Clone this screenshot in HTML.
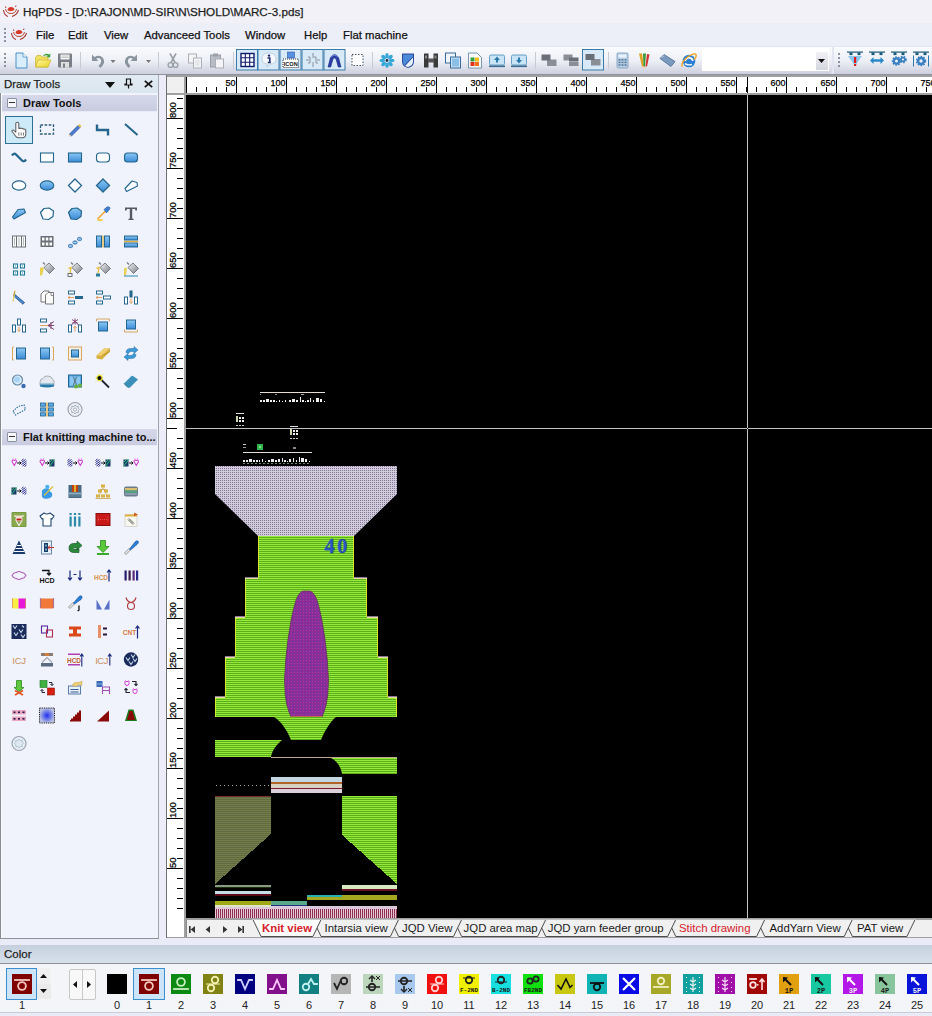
<!DOCTYPE html><html><head><meta charset="utf-8"><style>
*{box-sizing:border-box;margin:0;padding:0}
html,body{width:932px;height:1016px;overflow:hidden;background:#e9ebf6;font-family:"Liberation Sans",sans-serif;color:#1a1a1a}
body{position:relative}
.a{position:absolute}
.lbl{position:absolute;font-size:11px;color:#222;text-align:center;width:30px}
.tx{-webkit-text-stroke:0.25px currentColor}
</style></head><body>
<div class="a" style="left:0;top:0;width:932px;height:23px;background:#f1f1f7"></div>
<span class="a tx" style="left:23px;top:5px;font-size:11.7px;color:#1e1e1e;white-space:nowrap">HqPDS - [D:\RAJON\MD-SIR\N\SHOLD\MARC-3.pds]</span>
<svg class="a" style="left:2px;top:4px" width="18" height="14" viewBox="0 0 18 14">
<path d="M1.5 6 Q2 11 6 12.5 M10 12.5 Q15 11 16.5 6" fill="none" stroke="#a83a30" stroke-width="1.1"/>
<path d="M3.5 5 Q4.5 9.5 9 9.5 Q13.5 9.5 14.5 5" fill="none" stroke="#b84a38" stroke-width="1"/>
<path d="M5.5 6 Q6 3 9 3 Q12 3 12.5 5.5 Q10.5 7.5 9 7 Q7 7.5 5.5 6Z" fill="#d83a2a"/>
<path d="M3.5 2.5 L4 4 M14 1.5 L13.5 3" stroke="#a83a30" stroke-width="1"/>
</svg>
<div class="a" style="left:0;top:23px;width:932px;height:23px;background:#eceef8"></div>
<div class="a" style="left:4px;top:28px;width:2px;height:2px;background:#8e92a0"></div>
<div class="a" style="left:4px;top:32px;width:2px;height:2px;background:#8e92a0"></div>
<div class="a" style="left:4px;top:36px;width:2px;height:2px;background:#8e92a0"></div>
<div class="a" style="left:4px;top:40px;width:2px;height:2px;background:#8e92a0"></div>
<svg class="a" style="left:10px;top:27px" width="18" height="14" viewBox="0 0 18 14">
<path d="M1.5 6 Q2 11 6 12.5 M10 12.5 Q15 11 16.5 6" fill="none" stroke="#a83a30" stroke-width="1.1"/>
<path d="M3.5 5 Q4.5 9.5 9 9.5 Q13.5 9.5 14.5 5" fill="none" stroke="#b84a38" stroke-width="1"/>
<path d="M5.5 6 Q6 3 9 3 Q12 3 12.5 5.5 Q10.5 7.5 9 7 Q7 7.5 5.5 6Z" fill="#d83a2a"/>
<path d="M3.5 2.5 L4 4 M14 1.5 L13.5 3" stroke="#a83a30" stroke-width="1"/>
</svg>
<span class="a tx" style="left:36px;top:29px;font-size:11.3px;color:#111;white-space:nowrap">File</span>
<span class="a tx" style="left:68px;top:29px;font-size:11.3px;color:#111;white-space:nowrap">Edit</span>
<span class="a tx" style="left:104px;top:29px;font-size:11.3px;color:#111;white-space:nowrap">View</span>
<span class="a tx" style="left:144px;top:29px;font-size:11.3px;color:#111;white-space:nowrap">Advanceed Tools</span>
<span class="a tx" style="left:245px;top:29px;font-size:11.3px;color:#111;white-space:nowrap">Window</span>
<span class="a tx" style="left:304px;top:29px;font-size:11.3px;color:#111;white-space:nowrap">Help</span>
<span class="a tx" style="left:343px;top:29px;font-size:11.3px;color:#111;white-space:nowrap">Flat machine</span>
<div class="a" style="left:0;top:46px;width:932px;height:29px;background:#e3e5f1"></div>
<div class="a" style="left:0;top:47px;width:832px;height:27px;border-radius:0 0 3px 0;background:linear-gradient(#fafbfd,#eef0f7 50%,#cdd0dd)"></div>
<div class="a" style="left:834px;top:47px;width:98px;height:27px;background:linear-gradient(#fafbfd,#eef0f7 50%,#cdd0dd)"></div>
<div class="a" style="left:4px;top:53px;width:2px;height:2px;background:#8e92a0"></div>
<div class="a" style="left:838px;top:53px;width:2px;height:2px;background:#8e92a0"></div>
<div class="a" style="left:4px;top:57px;width:2px;height:2px;background:#8e92a0"></div>
<div class="a" style="left:838px;top:57px;width:2px;height:2px;background:#8e92a0"></div>
<div class="a" style="left:4px;top:61px;width:2px;height:2px;background:#8e92a0"></div>
<div class="a" style="left:838px;top:61px;width:2px;height:2px;background:#8e92a0"></div>
<div class="a" style="left:4px;top:65px;width:2px;height:2px;background:#8e92a0"></div>
<div class="a" style="left:838px;top:65px;width:2px;height:2px;background:#8e92a0"></div>
<div class="a" style="left:80px;top:52px;width:1px;height:17px;background:#c8cad6"></div>
<div class="a" style="left:158px;top:52px;width:1px;height:17px;background:#c8cad6"></div>
<div class="a" style="left:233px;top:52px;width:1px;height:17px;background:#c8cad6"></div>
<div class="a" style="left:372px;top:52px;width:1px;height:17px;background:#c8cad6"></div>
<div class="a" style="left:535px;top:52px;width:1px;height:17px;background:#c8cad6"></div>
<div class="a" style="left:608px;top:52px;width:1px;height:17px;background:#c8cad6"></div>
<div class="a" style="left:702px;top:48px;width:127px;height:23px;background:#fff"></div>
<div class="a" style="left:816px;top:52px;width:12px;height:18px;background:linear-gradient(#f2f2f6,#d4d6de)"></div>
<svg class="a" style="left:818px;top:59px" width="8" height="5"><path d="M0 0 H7 L3.5 4Z" fill="#111"/></svg>
<svg class="a" style="left:0;top:46px" width="932" height="30" viewBox="0 46 932 30"><defs><linearGradient id="tgb" x1="0" y1="0" x2="0" y2="1"><stop offset="0" stop-color="#aee0fa"/><stop offset="1" stop-color="#5aa8e0"/></linearGradient><linearGradient id="tgy" x1="0" y1="0" x2="1" y2="1"><stop offset="0" stop-color="#fff8a0"/><stop offset="1" stop-color="#e8d020"/></linearGradient></defs><g transform="translate(13.5,52.5)"><path d="M2.5 0.5 H9.5 L13.5 4.5 V15.5 H2.5Z" fill="#d8eefc" stroke="#4a90c8" stroke-width="1"/><path d="M9.5 0.5 V4.5 H13.5" fill="#fff" stroke="#4a90c8" stroke-width="0.8"/></g><g transform="translate(35,52.5)"><path d="M0.5 5 L2 3 H6 L7 4.5 H13 V14.5 H0.5Z" fill="#f0e060" stroke="#c8b030" stroke-width="0.7"/><path d="M0.5 14.5 L3 7.5 H16 L13 14.5Z" fill="url(#tgy)" stroke="#c8b030" stroke-width="0.7"/><path d="M8 3 Q11 0 14 2 L15.5 1 L15 5 L11.5 4.5 L13 3.5 Q11 2.2 9 3.5Z" fill="#3aa040"/></g><g transform="translate(57,52.5)"><rect x="1" y="1" width="14" height="14" rx="1" fill="#7a7e86"/><rect x="3.5" y="2" width="9" height="5" fill="#f4f4f4"/><path d="M4.5 3.5 H11.5 M4.5 5 H11.5" stroke="#aaa" stroke-width="0.6"/><rect x="4" y="9.5" width="8" height="5.5" fill="#e0e0e0"/><rect x="6" y="11" width="2" height="4" fill="#7a7e86"/></g><g transform="translate(89,52.5)"><path d="M3 2 V8.5 H9.5 L7.2 6.3 Q9.5 4.8 11.5 6.5 Q13 8.5 11.5 11 L9.5 13.5 L11.5 15.5 L13.8 12.8 Q16.5 9 13.8 5.2 Q10.5 1.5 5.5 4.5 L3.2 2.2Z" fill="#8a949e"/></g><path d="M110.5 60 H115.5 L113 63Z" fill="#777"/><g transform="translate(124,52.5)"><path d="M13 2 V8.5 H6.5 L8.8 6.3 Q6.5 4.8 4.5 6.5 Q3 8.5 4.5 11 L6.5 13.5 L4.5 15.5 L2.2 12.8 Q-0.5 9 2.2 5.2 Q5.5 1.5 10.5 4.5 L12.8 2.2Z" fill="#8a949e"/></g><path d="M146 60 H151 L148.5 63Z" fill="#777"/><g transform="translate(165,52.5)"><path d="M5 1 L10 10 M11 1 L6 10" stroke="#9aa0a8" stroke-width="1.6"/><circle cx="5.5" cy="12.5" r="2.4" fill="none" stroke="#9aa0a8" stroke-width="1.4"/><circle cx="10.5" cy="12.5" r="2.4" fill="none" stroke="#9aa0a8" stroke-width="1.4"/></g><g transform="translate(187,52.5)"><rect x="1.5" y="1.5" width="8" height="9" fill="#f4f4f6" stroke="#aab0b8"/><rect x="6.5" y="5.5" width="8" height="10" fill="#f4f4f6" stroke="#aab0b8"/><path d="M8.5 8.5 H12.5 M8.5 10.5 H12.5 M8.5 12.5 H12.5" stroke="#c8ccd2" stroke-width="0.7"/></g><g transform="translate(209,52.5)"><rect x="1.5" y="2.5" width="10" height="12" fill="#b8bcc4" stroke="#9aa0a8"/><rect x="4" y="1" width="5" height="3" fill="#9aa0a8"/><rect x="6.5" y="6.5" width="8" height="9" fill="#f4f4f6" stroke="#aab0b8"/></g><rect x="236.5" y="49.5" width="21" height="20.5" fill="#d8eaf8" stroke="#3a7aa8" stroke-width="1"/><rect x="258" y="49.5" width="21" height="20.5" fill="#d8eaf8" stroke="#3a7aa8" stroke-width="1"/><rect x="280" y="49.5" width="21" height="20.5" fill="#d8eaf8" stroke="#3a7aa8" stroke-width="1"/><rect x="302" y="49.5" width="21" height="20.5" fill="#d8eaf8" stroke="#3a7aa8" stroke-width="1"/><rect x="324" y="49.5" width="21" height="20.5" fill="#d8eaf8" stroke="#3a7aa8" stroke-width="1"/><rect x="582.5" y="49.5" width="21" height="20.5" fill="#d8eaf8" stroke="#3a7aa8" stroke-width="1"/><g transform="translate(239.5,52)"><rect x="1.5" y="1.5" width="13" height="13" fill="#fff" stroke="#101a6a" stroke-width="1.4"/><path d="M5.8 1.5 V14.5 M10.2 1.5 V14.5 M1.5 5.8 H14.5 M1.5 10.2 H14.5" stroke="#101a6a" stroke-width="1.1"/></g><g transform="translate(261,52)"><path d="M8 1 Q15 1 15 7 Q15 12 9 12 L6 15 L6.5 12 Q1 11.5 1 7 Q1 1 8 1Z" fill="#f4f8fc" stroke="#b8c8d8" stroke-width="0.8"/><circle cx="8" cy="3.6" r="1.2" fill="#1a2a6a"/><path d="M6.5 6 H8.8 V10.5 H9.8 M6.8 10.5 H9.8" stroke="#1a2a6a" stroke-width="1.5" fill="none"/></g><g transform="translate(282.5,52)"><rect x="5" y="0" width="7" height="6" fill="#5a90e0" stroke="#2a5aa8" stroke-width="0.6"/><rect x="0.5" y="7" width="15.5" height="8.5" fill="#fff" stroke="#222" stroke-width="0.9" stroke-dasharray="1 1"/><text x="8.2" y="13.8" font-family="Liberation Sans" font-size="5.6" font-weight="bold" text-anchor="middle" fill="#111">ICON</text></g><g transform="translate(305,52)"><path d="M8 1 V6 M8 10 V15 M1 8 H6 M10 8 H15 M4 4 V6 H6 M10 4 V6 H12 M4 12 V10 H6 M12 12 V10 H10" stroke="#8a9098" stroke-width="1" fill="none"/></g><g transform="translate(326.5,52)"><path d="M1.5 15 L4 5.5 Q8 -0.5 12 5.5 L14.5 15 H11.8 L9.6 7.2 Q8 4.8 6.4 7.2 L4.2 15Z" fill="#2a3ea8" stroke="#16247a" stroke-width="0.6"/><path d="M4.6 5.2 Q8 1 11.4 5.2" fill="none" stroke="#8ea8ee" stroke-width="0.8"/></g><g transform="translate(349.5,52)"><rect x="2.5" y="2.5" width="11" height="11" fill="#fff" stroke="#44505a" stroke-width="1" stroke-dasharray="1.5 1.5"/></g><g transform="translate(379,52.5)"><ellipse cx="8" cy="3.2" rx="1.8" ry="2.8" fill="#38a8d8" transform="rotate(0 8 8)"/><ellipse cx="8" cy="3.2" rx="1.8" ry="2.8" fill="#38a8d8" transform="rotate(45 8 8)"/><ellipse cx="8" cy="3.2" rx="1.8" ry="2.8" fill="#38a8d8" transform="rotate(90 8 8)"/><ellipse cx="8" cy="3.2" rx="1.8" ry="2.8" fill="#38a8d8" transform="rotate(135 8 8)"/><ellipse cx="8" cy="3.2" rx="1.8" ry="2.8" fill="#38a8d8" transform="rotate(180 8 8)"/><ellipse cx="8" cy="3.2" rx="1.8" ry="2.8" fill="#38a8d8" transform="rotate(225 8 8)"/><ellipse cx="8" cy="3.2" rx="1.8" ry="2.8" fill="#38a8d8" transform="rotate(270 8 8)"/><ellipse cx="8" cy="3.2" rx="1.8" ry="2.8" fill="#38a8d8" transform="rotate(315 8 8)"/><circle cx="8" cy="8" r="1.4" fill="#1a2a4a"/></g><g transform="translate(400,52.5)"><path d="M2 1 H14 V9 Q14 14 8 15.5 Q2 14 2 9Z" fill="#2a4a9a"/><path d="M3 2 H13 V4 L4 13 Q3 11.5 3 9Z" fill="#4a8ad8"/><path d="M13 5 V9 Q13 13 8 14.5 Q6 14 5 13.5Z" fill="#e8f0f8"/></g><g transform="translate(423,52.5)"><rect x="1" y="1" width="4.5" height="14" fill="#3a3a3a"/><rect x="10.5" y="1" width="4.5" height="14" fill="#3a3a3a"/><rect x="5" y="6" width="6" height="4" fill="#555"/><rect x="2" y="3" width="2" height="3" fill="#8a8a8a"/><rect x="11.5" y="3" width="2" height="3" fill="#8a8a8a"/></g><g transform="translate(445,52.5)"><rect x="0.5" y="0.5" width="10" height="10" fill="#f0f6fc" stroke="#3a6a98" stroke-width="1"/><rect x="5.5" y="4.5" width="10" height="11" fill="#cfe4f6" stroke="#3a6a98" stroke-width="1"/><rect x="7" y="6" width="7" height="8" fill="#8ac0e8"/></g><g transform="translate(467,52.5)"><path d="M1.5 0.5 H10 L14.5 5 V15.5 H1.5Z" fill="#fafafa" stroke="#6a8aa8" stroke-width="0.9"/><rect x="3.5" y="5" width="4" height="4" fill="#30a040"/><rect x="8" y="5" width="4" height="4" fill="#f0c020"/><rect x="3.5" y="9.5" width="4" height="4" fill="#e03020"/><rect x="8" y="9.5" width="4" height="4" fill="#f07020"/></g><g transform="translate(489,52.5)"><rect x="0.5" y="2.5" width="15" height="10" rx="1.5" fill="#c8e4f6" stroke="#4a8ab8" stroke-width="0.8"/><path d="M8 4 L5 7.5 H7 V10 H9 V7.5 H11Z" fill="#2a7ab0"/><rect x="0" y="13" width="16" height="1.6" fill="#3a6a90"/></g><g transform="translate(511,52.5)"><rect x="0.5" y="2.5" width="15" height="10" rx="1.5" fill="#c8e4f6" stroke="#4a8ab8" stroke-width="0.8"/><path d="M8 11 L5 7.5 H7 V5 H9 V7.5 H11Z" fill="#2a7ab0"/><rect x="0" y="13" width="16" height="1.6" fill="#3a6a90"/></g><g transform="translate(541,52.5)"><rect x="0.5" y="2" width="9" height="6" fill="#6a6e76"/><rect x="6" y="7" width="9.5" height="6.5" fill="#8a8e96"/><rect x="6" y="7" width="3.5" height="1" fill="#6a6e76"/></g><g transform="translate(563,52.5)"><rect x="0.5" y="2" width="9" height="6" fill="#8a8e96"/><rect x="6" y="5" width="9.5" height="4" fill="#6a6e76"/><rect x="6" y="9.5" width="9.5" height="4" fill="#8a8e96"/></g><g transform="translate(585,52)"><rect x="0.5" y="2" width="9" height="6" fill="#6a6e76"/><rect x="6" y="7" width="9.5" height="6.5" fill="#8a8e96"/><rect x="6" y="7" width="3.5" height="1" fill="#6a6e76"/></g><g transform="translate(615,52.5)"><rect x="2" y="0.5" width="11" height="15" rx="1" fill="#b8d0e8" stroke="#7a9ab8" stroke-width="0.8"/><rect x="3.5" y="2" width="8" height="3" fill="#e8f4fc"/><rect x="3.5" y="6.5" width="2" height="1.6" fill="#5a7a98"/><rect x="3.5" y="9.1" width="2" height="1.6" fill="#5a7a98"/><rect x="3.5" y="11.7" width="2" height="1.6" fill="#5a7a98"/><rect x="6.5" y="6.5" width="2" height="1.6" fill="#5a7a98"/><rect x="6.5" y="9.1" width="2" height="1.6" fill="#5a7a98"/><rect x="6.5" y="11.7" width="2" height="1.6" fill="#5a7a98"/><rect x="9.5" y="6.5" width="2" height="1.6" fill="#5a7a98"/><rect x="9.5" y="9.1" width="2" height="1.6" fill="#5a7a98"/><rect x="9.5" y="11.7" width="2" height="1.6" fill="#5a7a98"/></g><g transform="translate(636,52.5)"><path d="M3 1 L6 14 L8 14 L6 1Z" fill="#e0a020"/><path d="M7 1 L7.5 14 H9 L10 1Z" fill="#3a9a3a"/><path d="M11 1.5 L9.5 14 H11 L13.5 2Z" fill="#d03030"/><path d="M5 14 L8 16 L11 14Z" fill="#e8c8a0"/></g><g transform="translate(659,52.5)"><path d="M1 6 L5 2 L16 9 L12 14Z" fill="#7a9ac0" stroke="#4a6a90" stroke-width="0.8"/><path d="M3 5 L5 3" stroke="#c8d8e8" stroke-width="1"/></g><g transform="translate(681,52.5)"><circle cx="8" cy="8.5" r="6.3" fill="#2a80d0"/><path d="M3.5 8.5 H12.5 Q12.5 4.5 8 4.5 Q4.5 4.5 3.5 8.5Z" fill="#fff"/><path d="M5 8.5 H11 Q10.5 6 8 6 Q5.5 6 5 8.5Z" fill="#2a80d0"/><path d="M4 11 Q6 13 11 12" stroke="#fff" stroke-width="1.4" fill="none"/><path d="M1 14 Q0 10 6 5 Q13 0 15 2 Q16 4 13 7" stroke="#f0a020" stroke-width="1.3" fill="none"/></g><g transform="translate(847,51.5)"><rect x="0" y="0" width="16" height="1.2" fill="#1a5a7a"/><rect x="2.5" y="1" width="3" height="2.6" fill="#1a5a7a"/><rect x="10.5" y="1" width="3" height="2.6" fill="#1a5a7a"/><path d="M1 4.5 H15 L9 13 H7Z" fill="#8ac8f0"/><rect x="7" y="5.5" width="2.2" height="6" fill="#e01818"/><rect x="7" y="12.5" width="2.2" height="2" fill="#e01818"/></g><g transform="translate(869,51.5)"><rect x="0" y="0" width="16" height="1.2" fill="#1a5a7a"/><rect x="2.5" y="1" width="3" height="2.6" fill="#1a5a7a"/><rect x="10.5" y="1" width="3" height="2.6" fill="#1a5a7a"/><path d="M1 9 L4.5 5.5 V7.8 H11.5 V5.5 L15 9 L11.5 12.5 V10.2 H4.5 V12.5Z" fill="#2a8ac8"/></g><g transform="translate(891,51.5)"><rect x="0" y="0" width="16" height="1.2" fill="#1a5a7a"/><rect x="2.5" y="1" width="3" height="2.6" fill="#1a5a7a"/><rect x="10.5" y="1" width="3" height="2.6" fill="#1a5a7a"/><circle cx="5.5" cy="9.5" r="3.8" fill="#3a80c0" stroke="#3a80c0" stroke-width="2" stroke-dasharray="1.5 1.2"/><circle cx="5.5" cy="9.5" r="1.52" fill="#e8f0f8"/><circle cx="12" cy="8" r="2.8" fill="#3a80c0" stroke="#3a80c0" stroke-width="2" stroke-dasharray="1.5 1.2"/><circle cx="12" cy="8" r="1.1199999999999999" fill="#e8f0f8"/></g><g transform="translate(913,51.5)"><rect x="0" y="0" width="16" height="1.2" fill="#1a5a7a"/><rect x="2.5" y="1" width="3" height="2.6" fill="#1a5a7a"/><rect x="10.5" y="1" width="3" height="2.6" fill="#1a5a7a"/><path d="M0.5 4 V15 M15.5 4 V15" stroke="#2a7ab0" stroke-width="1"/><circle cx="8" cy="9.5" r="4.2" fill="#3a80c0" stroke="#3a80c0" stroke-width="2" stroke-dasharray="1.5 1.2"/><circle cx="8" cy="9.5" r="1.6800000000000002" fill="#e8f0f8"/></g></svg>
<div class="a" style="left:0;top:74px;width:932px;height:1px;background:#8e909c"></div>
<div class="a" style="left:0;top:75px;width:159px;height:864px;background:#eef0f9;border-right:1px solid #a8abb8;border-bottom:1px solid #a8abb8"></div>
<div class="a" style="left:0;top:75px;width:158px;height:18px;background:linear-gradient(#e2ebf2,#dbe5ee)"></div>
<span class="a tx" style="left:4px;top:78px;font-size:11.4px;color:#1e1e1e">Draw Tools</span>
<svg class="a" style="left:105px;top:82px" width="11" height="7"><path d="M0 0 H10 L5 6Z" fill="#111"/></svg>
<svg class="a" style="left:124px;top:78px" width="9" height="11"><path d="M2.5 1 H6.5 V6 H8 V7 H1 V6 H2.5Z M4.5 7 V10.5" fill="none" stroke="#111" stroke-width="1.2"/></svg>
<svg class="a" style="left:144px;top:80px" width="9" height="8"><path d="M0.8 0.8 L8.2 7.2 M8.2 0.8 L0.8 7.2" stroke="#111" stroke-width="1.7"/></svg>
<div class="a" style="left:0;top:93px;width:159px;height:846px;background:#f0f3fc;border-left:1px solid #868a92;border-right:1px solid #a0a4ae;border-bottom:1px solid #8e9298"></div>
<div class="a" style="left:1px;top:93px;width:1px;height:845px;background:#fbfdff"></div>
<div class="a" style="left:2px;top:95px;width:155px;height:16px;background:linear-gradient(#d6d8ea,#c9cce0)"></div>
<div class="a" style="left:2px;top:111px;width:155px;height:1px;background:#e8eaf4"></div>
<div class="a" style="left:7px;top:98px;width:10px;height:10px;border:1px solid #8e93a2;background:#f6f7fb;border-radius:1px"></div>
<div class="a" style="left:9px;top:102px;width:6px;height:1px;background:#333"></div>
<span class="a" style="left:23px;top:97px;font-size:11px;font-weight:bold;color:#111;white-space:nowrap">Draw Tools</span>
<div class="a" style="left:2px;top:429px;width:155px;height:16px;background:linear-gradient(#d6d8ea,#c9cce0)"></div>
<div class="a" style="left:2px;top:445px;width:155px;height:1px;background:#e8eaf4"></div>
<div class="a" style="left:7px;top:432px;width:10px;height:10px;border:1px solid #8e93a2;background:#f6f7fb;border-radius:1px"></div>
<div class="a" style="left:9px;top:436px;width:6px;height:1px;background:#333"></div>
<span class="a" style="left:23px;top:431px;font-size:11px;font-weight:bold;color:#111;white-space:nowrap">Flat knitting machine to...</span>
<div class="a" style="left:5px;top:116px;width:28px;height:28px;background:#cdeaf8;border:1px solid #2f6f94"></div>
<svg class="a" style="left:0;top:110px" width="160" height="650" viewBox="0 110 160 650"><defs><linearGradient id="gb" x1="0" y1="0" x2="0" y2="1"><stop offset="0" stop-color="#8cc8f4"/><stop offset="1" stop-color="#3a8ad8"/></linearGradient><linearGradient id="gg" x1="0" y1="0" x2="1" y2="1"><stop offset="0" stop-color="#f4f4f6"/><stop offset="1" stop-color="#7a7e88"/></linearGradient></defs><g transform="translate(11,121.5)"><path d="M4.8 2 Q4.8 0.8 6.3 0.8 Q7.8 0.8 7.8 2 V7 Q9 6.2 10.2 7 Q11.5 6.4 12.4 7.6 Q13.8 7.2 14.8 8.6 V12.5 Q14.8 16.2 11 16.2 H7.5 Q5.5 16.2 4.3 14.2 L1 9.8 Q0.6 8.4 2.2 8.4 L4.8 10.6Z" fill="#fdfdfd" stroke="#5e5e62" stroke-width="1.05" stroke-linejoin="round"/><path d="M7.8 11 V14 M10.2 11 V14 M12.5 11 V14" stroke="#6a6a6e" stroke-width="0.9"/></g><g transform="translate(39,121.5)"><rect x="1.5" y="3.5" width="13" height="9" fill="none" stroke="#2a5a74" stroke-width="1.3" stroke-dasharray="2.6 1.5"/></g><g transform="translate(67,121.5)"><path d="M3 14 L2.5 12.5 L11 4 L13 6 L4.5 14.5Z" fill="#4a7ed0" stroke="#2a4a90" stroke-width="0.7"/><path d="M11 4 L12.5 2.5 L14.5 4.5 L13 6Z" fill="#f0c040"/><path d="M2.5 12.5 L2 15 L4.5 14.5Z" fill="#f0d090"/></g><g transform="translate(95,121.5)"><path d="M2 3 V8.5 H13 V14" fill="none" stroke="#24668c" stroke-width="2.4"/></g><g transform="translate(123,121.5)"><path d="M2 2.5 L14.5 13.5" stroke="#24668c" stroke-width="2"/></g><g transform="translate(11,149.5)"><path d="M1 6 Q3 3 5 5 L11 11 Q13 13 15 10" fill="none" stroke="#24668c" stroke-width="2.3"/></g><g transform="translate(39,149.5)"><rect x="1.5" y="3.5" width="13" height="9" fill="#fbfcff" stroke="#24668c" stroke-width="1.1"/></g><g transform="translate(67,149.5)"><rect x="1.5" y="3.5" width="13" height="9" fill="url(#gb)" stroke="#24668c" stroke-width="1.1"/></g><g transform="translate(95,149.5)"><rect x="1.5" y="3.5" width="13" height="9" rx="3" fill="#fbfcff" stroke="#24668c" stroke-width="1.1"/></g><g transform="translate(123,149.5)"><rect x="1.5" y="3.5" width="13" height="9" rx="3" fill="url(#gb)" stroke="#24668c" stroke-width="1.1"/></g><g transform="translate(11,177.5)"><ellipse cx="8" cy="8" rx="6.8" ry="4.6" fill="#fbfcff" stroke="#24668c" stroke-width="1.1"/></g><g transform="translate(39,177.5)"><ellipse cx="8" cy="8" rx="6.8" ry="4.6" fill="url(#gb)" stroke="#24668c" stroke-width="1.1"/></g><g transform="translate(67,177.5)"><path d="M8 1.5 L14.5 8 L8 14.5 L1.5 8Z" fill="#fbfcff" stroke="#24668c" stroke-width="1.3"/></g><g transform="translate(95,177.5)"><path d="M8 1.5 L14.5 8 L8 14.5 L1.5 8Z" fill="url(#gb)" stroke="#24668c" stroke-width="1.3"/></g><g transform="translate(123,177.5)"><path d="M2 11 L9 3.5 L14 5 L14.5 8.5 L3.5 14Z" fill="#fbfcff" stroke="#24668c" stroke-width="1.1" stroke-linejoin="round"/></g><g transform="translate(11,205.5)"><path d="M1.5 11.5 L7 4 L13 3.5 L14.5 7 L3 13.5Z" fill="url(#gb)" stroke="#24668c" stroke-width="1.1" stroke-linejoin="round"/></g><g transform="translate(39,205.5)"><path d="M1.5 7 L5 3 L10 2.5 L14.5 5.5 L14 11 L9.5 14 L4 13.5Z" fill="#fbfcff" stroke="#24668c" stroke-width="1.2" stroke-linejoin="round"/></g><g transform="translate(67,205.5)"><path d="M1.5 7 L5 3 L10 2.5 L14.5 5.5 L14 11 L9.5 14 L4 13.5Z" fill="url(#gb)" stroke="#24668c" stroke-width="1.2" stroke-linejoin="round"/></g><g transform="translate(95,205.5)"><path d="M2 13 L10 5 L11 6 L3 14Z" fill="#f0a030"/><path d="M9 4 L12 1.5 Q14 0.8 14.8 2 Q15.4 3 14 4.5 L11.5 7.5Z" fill="#3a80d0" stroke="#2a5a9a" stroke-width="0.6"/><ellipse cx="5" cy="14.6" rx="3" ry="1.2" fill="#f0d050"/></g><g transform="translate(123,205.5)"><path d="M2 2 H14 V5 H12.5 L12 3.6 H9.2 V13 L10.6 13.6 V14.5 H5.4 V13.6 L6.8 13 V3.6 H4 L3.5 5 H2Z" fill="#555a62"/></g><g transform="translate(11,233.5)"><rect x="1.5" y="2.5" width="13" height="11" fill="#fff" stroke="#6b6e76"/><path d="M5.5 2.5 V13.5 M10.5 2.5 V13.5" stroke="#6b6e76"/><path d="M3.5 4 V12 M8 4 V12 M12.5 4 V12" stroke="#9aa" stroke-width="0.8"/></g><g transform="translate(39,233.5)"><rect x="1.5" y="2.5" width="13" height="11" fill="#6b6e76"/><g fill="#fff"><rect x="3" y="4" width="2.5" height="3"/><rect x="6.8" y="4" width="2.5" height="3"/><rect x="10.5" y="4" width="2.5" height="3"/><rect x="3" y="9" width="2.5" height="3"/><rect x="6.8" y="9" width="2.5" height="3"/><rect x="10.5" y="9" width="2.5" height="3"/></g></g><g transform="translate(67,233.5)"><g fill="#5a9ad8" stroke="#2a6aa0" stroke-width="0.6"><ellipse cx="3.5" cy="12.5" rx="2.2" ry="1.8"/><ellipse cx="8" cy="9" rx="2.2" ry="1.8"/><ellipse cx="12.5" cy="5.5" rx="2.2" ry="1.8"/></g><path d="M2 12.5 H5 M6.5 9 H9.5 M11 5.5 H14" stroke="#fff" stroke-width="0.6"/></g><g transform="translate(95,233.5)"><rect x="1.5" y="2.5" width="5" height="11" fill="url(#gb)" stroke="#24668c"/><rect x="9.5" y="2.5" width="5" height="11" fill="url(#gb)" stroke="#24668c"/><rect x="7.4" y="2" width="1.2" height="12" fill="#e0b040"/></g><g transform="translate(123,233.5)"><rect x="1.5" y="2.5" width="13" height="4" fill="url(#gb)" stroke="#24668c"/><rect x="1.5" y="9.5" width="13" height="4" fill="url(#gb)" stroke="#24668c"/><rect x="1" y="7.4" width="14" height="1.2" fill="#e0b040"/></g><g transform="translate(11,261.5)"><g fill="#fff" stroke="#1e7a94" stroke-width="1.1"><rect x="2.5" y="2.5" width="4" height="4"/><rect x="9.5" y="2.5" width="4" height="4"/><rect x="2.5" y="9.5" width="4" height="4"/><rect x="9.5" y="9.5" width="4" height="4"/></g><g fill="#2a8ab0"><rect x="4" y="4" width="1" height="1"/><rect x="11" y="4" width="1" height="1"/><rect x="4" y="11" width="1" height="1"/><rect x="11" y="11" width="1" height="1"/></g></g><g transform="translate(39,261.5)"><path d="M5 6 L10 1.5 L15.5 7 L10.5 12 Z" fill="url(#gg)" stroke="#555" stroke-width="0.7"/><path d="M6 3 L4 1" stroke="#777" stroke-width="1.2"/><path d="M1 6 L5 6 L3 14 L1 14Z" fill="#e8d050"/></g><g transform="translate(67,261.5)"><path d="M5 6 L10 1.5 L15.5 7 L10.5 12 Z" fill="url(#gg)" stroke="#555" stroke-width="0.7"/><path d="M6 3 L4 1" stroke="#777" stroke-width="1.2"/><path d="M1.5 7 L4 6 L3 12" fill="none" stroke="#e8c040" stroke-width="1.4"/><rect x="1" y="12" width="4" height="3" fill="none" stroke="#555" stroke-width="0.8"/></g><g transform="translate(95,261.5)"><path d="M5 6 L10 1.5 L15.5 7 L10.5 12 Z" fill="url(#gg)" stroke="#555" stroke-width="0.7"/><path d="M6 3 L4 1" stroke="#777" stroke-width="1.2"/><path d="M1.5 7 L4 6 L3 12" fill="none" stroke="#e8c040" stroke-width="1.4"/><rect x="1" y="12" width="4" height="3" fill="#2a7a9a"/></g><g transform="translate(123,261.5)"><path d="M5 6 L10 1.5 L15.5 7 L10.5 12 Z" fill="url(#gg)" stroke="#555" stroke-width="0.7"/><path d="M6 3 L4 1" stroke="#777" stroke-width="1.2"/><path d="M1 7 L4 6 L3 14 L1 14Z" fill="#e8d050"/><rect x="1" y="14" width="14" height="1" fill="#2a8ab0"/></g><g transform="translate(11,289.5)"><path d="M4 5 L13.5 13 L12 14.8 L2.5 6.5Z" fill="#4a8ad0" stroke="#24568c" stroke-width="0.8"/><path d="M4 1 L2 12" stroke="#e8d060" stroke-width="1.3"/><path d="M3.6 2 L2.8 6" stroke="#a08020" stroke-width="0.8"/></g><g transform="translate(39,289.5)"><path d="M2 4.5 L5 1.5 H10 V12.5 H2Z" fill="#fafafa" stroke="#6a6a6a" stroke-width="0.9"/><path d="M6.5 5.5 L9 3 H14.5 V14.5 H6.5Z" fill="#fafafa" stroke="#6a6a6a" stroke-width="0.9"/><path d="M12 3.5 V6 H14" fill="none" stroke="#777" stroke-width="0.8"/></g><g transform="translate(67,289.5)"><g fill="#fff" stroke="#24668c"><rect x="1.5" y="1.5" width="6" height="3"/><rect x="1.5" y="11.5" width="6" height="3"/></g><rect x="8" y="6.5" width="8" height="3" fill="#24668c"/><path d="M1 8 H7" stroke="#e0a060" stroke-width="1"/><path d="M3 6.5 L1 8 L3 9.5" fill="none" stroke="#e0a060" stroke-width="0.9"/></g><g transform="translate(95,289.5)"><g fill="#fff" stroke="#24668c"><rect x="1.5" y="1.5" width="6" height="3"/><rect x="8.5" y="6.5" width="7" height="3"/><rect x="1.5" y="11.5" width="6" height="3"/></g><path d="M1 8 H7" stroke="#e0a060" stroke-width="1"/><path d="M3 6.5 L1 8 L3 9.5" fill="none" stroke="#e0a060" stroke-width="0.9"/></g><g transform="translate(123,289.5)"><g fill="#fff" stroke="#24668c"><rect x="1.5" y="7.5" width="3" height="7"/><rect x="11.5" y="7.5" width="3" height="7"/></g><rect x="6.5" y="1" width="3" height="7" fill="#24668c"/><path d="M8 9 V14" stroke="#e0a060"/><path d="M6.5 12 L8 14 L9.5 12" fill="none" stroke="#e0a060" stroke-width="0.9"/></g><g transform="translate(11,317.5)"><g fill="#fff" stroke="#24668c"><rect x="1.5" y="7.5" width="3" height="7"/><rect x="11.5" y="7.5" width="3" height="7"/><rect x="6.5" y="1.5" width="3" height="6"/></g><path d="M8 9 V14" stroke="#e0a060"/><path d="M6.5 12 L8 14 L9.5 12" fill="none" stroke="#e0a060" stroke-width="0.9"/></g><g transform="translate(39,317.5)"><g fill="#fff" stroke="#24668c"><rect x="1.5" y="1.5" width="6" height="3"/><rect x="1.5" y="11.5" width="6" height="3"/></g><path d="M1 8 H9" stroke="#e0a060"/><path d="M9 8 L15 4 M9 8 L15 12 M9 8 H15 M12 4.5 V11.5" stroke="#7a3a6a" stroke-width="0.9"/></g><g transform="translate(67,317.5)"><g fill="#fff" stroke="#24668c"><rect x="1.5" y="7.5" width="3" height="7"/><rect x="11.5" y="7.5" width="3" height="7"/></g><path d="M8 8.5 V14" stroke="#e0a060"/><path d="M6.5 10.5 L8 8.5 L9.5 10.5" fill="none" stroke="#e0a060" stroke-width="0.9"/><path d="M8 1 V7 M5 2 L11 6 M11 2 L5 6 M4.5 7.5 L8 4 L11.5 7.5" stroke="#7a3a6a" stroke-width="0.9" fill="none"/></g><g transform="translate(95,317.5)"><path d="M1.5 4 V1.5 H14.5 V4" fill="none" stroke="#d8a860" stroke-width="1"/><rect x="3.5" y="4.5" width="9" height="9" fill="url(#gb)" stroke="#24668c"/></g><g transform="translate(123,317.5)"><path d="M1.5 12 V14.5 H14.5 V12" fill="none" stroke="#d8a860" stroke-width="1"/><rect x="3.5" y="2.5" width="9" height="9" fill="url(#gb)" stroke="#24668c"/></g><g transform="translate(11,345.5)"><path d="M3 1.5 H1.5 V14.5 H3" fill="none" stroke="#d8a860" stroke-width="1"/><rect x="5.5" y="2.5" width="9" height="11" fill="url(#gb)" stroke="#24668c"/></g><g transform="translate(39,345.5)"><path d="M13 1.5 H14.5 V14.5 H13" fill="none" stroke="#d8a860" stroke-width="1"/><rect x="1.5" y="2.5" width="9" height="11" fill="url(#gb)" stroke="#24668c"/></g><g transform="translate(67,345.5)"><rect x="1.5" y="1.5" width="13" height="13" fill="#f6f0e6" stroke="#d8a860"/><rect x="4.5" y="4.5" width="7" height="7" fill="url(#gb)" stroke="#24668c"/></g><g transform="translate(95,345.5)"><path d="M1.5 10 L9 3 H14.5 L14.5 6.5 L7 14 L1.5 13Z" fill="#d8b040"/><path d="M1.5 10 L9 3 H14.5 L7 10Z" fill="#f0d070"/><path d="M7 10 L14.5 6.5 V3" fill="none" stroke="#b08820" stroke-width="0.6"/></g><g transform="translate(123,345.5)"><path d="M3 7 Q3 3 8 3 H11 V1 L15 4.5 L11 8 V6 H8 Q6 6 5.5 8Z" fill="#3a9ad8" stroke="#2a6aa0" stroke-width="0.5"/><path d="M13 9 Q13 13 8 13 H5 V15 L1 11.5 L5 8 V10 H8 Q10 10 10.5 8Z" fill="#3a9ad8" stroke="#2a6aa0" stroke-width="0.5"/></g><g transform="translate(11,373.5)"><circle cx="6.5" cy="6.5" r="5" fill="#d8ecf8" stroke="#6a8aa8" stroke-width="1.2"/><circle cx="6" cy="6" r="3" fill="#a8d4f4"/><circle cx="12.5" cy="12.5" r="2.2" fill="#3a6ab0"/></g><g transform="translate(39,373.5)"><path d="M1 9 Q1 5 4 5 Q5 2 9 2.5 Q13 3 14 6 Q15.5 7 15 10 L15 12 L1 12Z" fill="#e4e8ee" stroke="#8a9098" stroke-width="0.7"/><path d="M1 10 H15 V13 Q8 15 1 13Z" fill="#2a7aa8"/><path d="M1 10.5 H15" stroke="#cfe4f0" stroke-width="0.8"/></g><g transform="translate(67,373.5)"><rect x="1.5" y="1.5" width="13" height="12" fill="#5aaae8" stroke="#24668c"/><rect x="3" y="3" width="4.5" height="9" fill="#8ac8f4"/><rect x="8.5" y="3" width="4.5" height="9" fill="#8ac8f4"/><path d="M6 3 L10 12 M10 3 L6 12" stroke="#555" stroke-width="0.7"/><circle cx="9" cy="13" r="2" fill="#6ab040"/><circle cx="13" cy="12" r="2" fill="#6ab040"/></g><g transform="translate(95,373.5)"><path d="M6 6 L14 14" stroke="#223" stroke-width="1.8"/><circle cx="4.5" cy="4.5" r="2.6" fill="#111" stroke="#e8e030" stroke-width="1.2"/><path d="M4.5 0.5 V1.5 M0.5 4.5 H1.5 M8 1 L7.5 1.5 M1 8 L1.5 7.5" stroke="#e8e030"/></g><g transform="translate(123,373.5)"><path d="M1 10 L8 3 Q9 2 10 2.5 L15 6 L7 14 Q6 14.5 5 14Z" fill="#3a90b8"/><path d="M1 10 L5 14" stroke="#2a6a8a" stroke-width="1"/></g><g transform="translate(11,401.5)"><path d="M2 10 L7 5 L13 3.5 L14.5 8 L4.5 13.5Z" fill="none" stroke="#24668c" stroke-width="1.1" stroke-dasharray="1.4 1.2"/></g><g transform="translate(39,401.5)"><g fill="#5aaae8" stroke="#24668c" stroke-width="0.8"><rect x="1.5" y="1.5" width="5" height="3.2"/><rect x="1.5" y="6.4" width="5" height="3.2"/><rect x="1.5" y="11.3" width="5" height="3.2"/><rect x="9.5" y="1.5" width="5" height="3.2"/><rect x="9.5" y="6.4" width="5" height="3.2"/><rect x="9.5" y="11.3" width="5" height="3.2"/></g><rect x="7.4" y="1" width="1.2" height="14" fill="#e0b040"/></g><g transform="translate(67,401.5)"><circle cx="8" cy="8" r="7" fill="#eef0f6" stroke="#9a9ea8" stroke-width="1.1"/><path d="M8 3.5 L9.3 5 L11.2 4.8 L11.2 6.7 L12.5 8 L11.2 9.3 L11.2 11.2 L9.3 11 L8 12.5 L6.7 11 L4.8 11.2 L4.8 9.3 L3.5 8 L4.8 6.7 L4.8 4.8 L6.7 5Z" fill="none" stroke="#9aa8b8" stroke-width="0.9"/><circle cx="8" cy="8" r="1.6" fill="none" stroke="#9aa8b8" stroke-width="0.8"/></g><g transform="translate(11,455.5)"><path d="M1.0 6 Q1.0 4.5 2.3 4.5 Q3.3 4.5 3.3 5.6 Q3.3 4.5 4.3 4.5 Q5.5 4.5 5.5 6 L3.3 10Z" fill="none" stroke="#d040d0" stroke-width="1.1"/><path d="M2.0 4 L2.0 3 M4.5 4 L4.5 3" stroke="#d040d0" stroke-width="0.8"/><path d="M6 7.5 H10 M8.5 6 L10 7.5 L8.5 9" stroke="#111" stroke-width="1" fill="none"/><path d="M10.5 5 L12.5 3.5 M10.5 7 L14.5 4 M10.5 9 L15.5 5.5 M11.5 10.5 L15.5 7.5 M13.5 11 L15.5 9.5" stroke="#2a2a8a" stroke-width="1"/></g><g transform="translate(39,455.5)"><path d="M1.0 6 Q1.0 4.5 2.3 4.5 Q3.3 4.5 3.3 5.6 Q3.3 4.5 4.3 4.5 Q5.5 4.5 5.5 6 L3.3 10Z" fill="none" stroke="#d040d0" stroke-width="1.1"/><path d="M2.0 4 L2.0 3 M4.5 4 L4.5 3" stroke="#d040d0" stroke-width="0.8"/><path d="M6 7.5 H10 M8.5 6 L10 7.5 L8.5 9" stroke="#111" stroke-width="1" fill="none"/><rect x="10.5" y="4" width="5" height="7" fill="#1a3a6a"/><path d="M10.5 11 L15.5 4 M10.5 7 L13.5 4" stroke="#30c070" stroke-width="1"/></g><g transform="translate(67,455.5)"><path d="M0.5 5 L2.5 3.5 M0.5 7 L4.5 4 M0.5 9 L5.5 5.5 M1.5 10.5 L5.5 7.5 M3.5 11 L5.5 9.5" stroke="#2a2a8a" stroke-width="1"/><path d="M6 7.5 H10 M8.5 6 L10 7.5 L8.5 9" stroke="#111" stroke-width="1" fill="none"/><path d="M11.0 6 Q11.0 4.5 12.3 4.5 Q13.3 4.5 13.3 5.6 Q13.3 4.5 14.3 4.5 Q15.5 4.5 15.5 6 L13.3 10Z" fill="none" stroke="#d040d0" stroke-width="1.1"/><path d="M12.0 4 L12.0 3 M14.5 4 L14.5 3" stroke="#d040d0" stroke-width="0.8"/></g><g transform="translate(95,455.5)"><path d="M0.5 5 L2.5 3.5 M0.5 7 L4.5 4 M0.5 9 L5.5 5.5 M1.5 10.5 L5.5 7.5 M3.5 11 L5.5 9.5" stroke="#2a2a8a" stroke-width="1"/><path d="M6 7.5 H10 M8.5 6 L10 7.5 L8.5 9" stroke="#111" stroke-width="1" fill="none"/><rect x="10.5" y="4" width="5" height="7" fill="#1a3a6a"/><path d="M10.5 11 L15.5 4 M10.5 7 L13.5 4" stroke="#30c070" stroke-width="1"/></g><g transform="translate(123,455.5)"><rect x="0.5" y="4" width="5" height="7" fill="#1a3a6a"/><path d="M0.5 11 L5.5 4 M0.5 7 L3.5 4" stroke="#30c070" stroke-width="1"/><path d="M6 7.5 H10 M8.5 6 L10 7.5 L8.5 9" stroke="#111" stroke-width="1" fill="none"/><path d="M11.0 6 Q11.0 4.5 12.3 4.5 Q13.3 4.5 13.3 5.6 Q13.3 4.5 14.3 4.5 Q15.5 4.5 15.5 6 L13.3 10Z" fill="none" stroke="#d040d0" stroke-width="1.1"/><path d="M12.0 4 L12.0 3 M14.5 4 L14.5 3" stroke="#d040d0" stroke-width="0.8"/></g><g transform="translate(11,483.5)"><rect x="0.5" y="4" width="5" height="7" fill="#1a3a6a"/><path d="M0.5 11 L5.5 4 M0.5 7 L3.5 4" stroke="#30c070" stroke-width="1"/><path d="M6 7.5 H10 M8.5 6 L10 7.5 L8.5 9" stroke="#111" stroke-width="1" fill="none"/><path d="M10.5 5 L12.5 3.5 M10.5 7 L14.5 4 M10.5 9 L15.5 5.5 M11.5 10.5 L15.5 7.5 M13.5 11 L15.5 9.5" stroke="#2a2a8a" stroke-width="1"/></g><g transform="translate(39,483.5)"><path d="M3 10 Q2 6 6 5 Q10 4 11 8 Q14 9 13 13 Q10 16 5 15 Q2 14 3 10Z" fill="#3a9ae8"/><path d="M6 3 Q7 0.5 9.5 1.5 Q11 3 10 5 Q7 6 6 3Z" fill="#4ab0f0"/><path d="M5 12 L14 3" stroke="#d8c040" stroke-width="1.3"/></g><g transform="translate(67,483.5)"><rect x="1.5" y="1.5" width="13" height="13" fill="#4a6a80"/><rect x="5" y="1.5" width="6" height="7" fill="#c04010"/><rect x="7" y="1.5" width="2" height="7" fill="#e0b030"/><rect x="1.5" y="9" width="13" height="2" fill="#8ab0c0"/><rect x="1.5" y="12" width="13" height="1" fill="#6a90a8"/></g><g transform="translate(95,483.5)"><g fill="#d8b040"><rect x="6" y="1" width="4" height="3"/><rect x="3" y="6" width="4" height="3"/><rect x="9" y="6" width="4" height="3"/><rect x="1" y="11" width="4" height="3"/><rect x="6" y="11" width="4" height="3"/><rect x="11" y="11" width="4" height="3"/></g><path d="M8 4 V6 L5 6 M8 6 H11 M5 9 V11 M11 9 V11 M0.5 15 H15.5" stroke="#c8a040" stroke-width="0.8" fill="none"/></g><g transform="translate(123,483.5)"><rect x="1" y="3" width="14" height="10" rx="2" fill="#6a7a8a"/><rect x="2" y="4.5" width="12" height="2.5" fill="#d8c070"/><rect x="2" y="7" width="12" height="2.5" fill="#50a080"/><rect x="2" y="9.5" width="12" height="2" fill="#8a9ab0"/></g><g transform="translate(11,511.5)"><rect x="0.5" y="0.5" width="15" height="15" rx="1" fill="#7a9a40"/><rect x="1.5" y="1.5" width="13" height="13" fill="#8aaa50"/><path d="M3 4 Q8 9 13 4 M5 7 H11 V9 H5Z" fill="#f0e0d0" stroke="#f8f0e8" stroke-width="1"/><path d="M5 9 L8 14 L11 9" fill="none" stroke="#f0e8e0" stroke-width="1.2"/><rect x="5.5" y="7" width="5" height="2" fill="#c02020"/></g><g transform="translate(39,511.5)"><path d="M5 1.5 Q8 3.5 11 1.5 L15 4.5 L13 7.5 L12 7 V14.5 H4 V7 L3 7.5 L1 4.5Z" fill="#fff" stroke="#24466c" stroke-width="1.1" stroke-linejoin="round"/></g><g transform="translate(67,511.5)"><g fill="#2a8aa8"><rect x="2.5" y="5" width="2.2" height="10"/><rect x="6.9" y="5" width="2.2" height="10"/><rect x="11.3" y="5" width="2.2" height="10"/><rect x="2.5" y="1.5" width="2.2" height="2"/><rect x="6.9" y="1.5" width="2.2" height="2"/><rect x="11.3" y="1.5" width="2.2" height="2"/></g></g><g transform="translate(95,511.5)"><rect x="1" y="2" width="14" height="12" fill="#c81818"/><rect x="1" y="2" width="14" height="12" fill="none" stroke="#8a1010"/><path d="M3 5 V11 M13 5 V11 M3 8 H13" stroke="#f06060" stroke-width="0.8" stroke-dasharray="1 1"/></g><g transform="translate(123,511.5)"><rect x="2" y="3" width="12" height="12" fill="#f8f8f0" stroke="#c8c8c0" stroke-width="0.7"/><path d="M2 3 H14 V5 H2Z" fill="#e0b040"/><path d="M11 1 L15 3 L11 5Z" fill="#d06020"/><path d="M5 8 L10 13 M6 7 L11 12" stroke="#444" stroke-width="0.9"/></g><g transform="translate(11,539.5)"><path d="M8 1 L14.5 14.5 H1.5Z" fill="#1a3a6a"/><path d="M6 6 H10 M4.5 9 H11.5 M3 12 H13" stroke="#fff" stroke-width="1"/></g><g transform="translate(39,539.5)"><rect x="2.5" y="1.5" width="10" height="13" fill="#e8f0f8" stroke="#6a8aa8"/><rect x="5" y="3.5" width="4" height="9" fill="#1a3a6a"/><rect x="6" y="5" width="2" height="2" fill="#6ab"/><rect x="6" y="9" width="2" height="2" fill="#6ab"/><path d="M9 8 H15 M11 6 L9 8 L11 10" stroke="#c03030" stroke-width="1" fill="none"/></g><g transform="translate(67,539.5)"><path d="M12 13 H7 Q2 13 2 8.5 Q2 4 7 4 H10 V1.5 L15 6 L10 10.5 V8 H7 Q6 8 6 8.5 Q6 9.5 7 9.5 H12Z" fill="#2a8a3a" stroke="#1a5a2a" stroke-width="0.7"/></g><g transform="translate(95,539.5)"><path d="M5.5 1 H10.5 V7 H14 L8 13 L2 7 H5.5Z" fill="#5ac83a" stroke="#2a8a1a" stroke-width="0.8"/><rect x="2" y="13.5" width="12" height="2" fill="#3aaa2a"/></g><g transform="translate(123,539.5)"><path d="M3 15 L1.5 13.5 L6 9 L7.5 10.5Z" fill="#e8e8e8" stroke="#777" stroke-width="0.7"/><path d="M6.5 9.5 L12 2.5 Q14 0.5 15.2 1.8 Q16 3.5 14 5 L7.5 10.5Z" fill="#2a80d8" stroke="#1a5aa0" stroke-width="0.7"/></g><g transform="translate(11,567.5)"><path d="M1 8 Q3 4.5 5.5 5 Q8 3 10.5 5 Q13 4.5 15 8 Q13 11.5 10.5 11 Q8 13 5.5 11 Q3 11.5 1 8Z" fill="none" stroke="#b060b8" stroke-width="1.1"/></g><g transform="translate(39,567.5)"><path d="M3 3 H10 V7 M8 5.5 L10 7.5 L12 5.5" stroke="#111" stroke-width="1.3" fill="none"/><text x="8" y="15" font-family="Liberation Sans" font-size="7" font-weight="bold" text-anchor="middle" fill="#111">HCD</text></g><g transform="translate(67,567.5)"><path d="M3 3 V12 M1 10 L3 12.5 L5 10 M13 3 V12 M11 10 L13 12.5 L15 10 M6.5 7 H9.5" stroke="#1a2a7a" stroke-width="1.2" fill="none"/></g><g transform="translate(95,567.5)"><text x="6" y="12" font-family="Liberation Sans" font-size="6.5" font-weight="bold" text-anchor="middle" fill="#d89050">HCD</text><path d="M14 14 V3 M12 5 L14 2.5 L16 5" stroke="#1a2a7a" stroke-width="1.2" fill="none"/></g><g transform="translate(123,567.5)"><rect x="1.5" y="3" width="2.2" height="10" fill="#2a1a6a"/><rect x="5.5" y="3" width="2.2" height="10" fill="#3a1a4a"/><rect x="9.5" y="3" width="2.2" height="10" fill="#5a2a7a"/><rect x="13" y="3" width="2.2" height="10" fill="#2a2a8a"/></g><g transform="translate(11,595.5)"><rect x="1.5" y="3" width="6" height="10" fill="#f8f040"/><rect x="7.5" y="3" width="7" height="10" fill="#e818d8"/><path d="M1.5 3 V13 M14.5 3 V13" stroke="#c86010" stroke-width="1" stroke-dasharray="1 1"/></g><g transform="translate(39,595.5)"><rect x="1.5" y="3" width="13" height="10" fill="#f07838"/><path d="M1.5 3 V13 M14.5 3 V13" stroke="#6a2a8a" stroke-width="1.2" stroke-dasharray="1 1"/></g><g transform="translate(67,595.5)"><path d="M3 13 L1.5 11.5 L6 7 L7.5 8.5Z" fill="#e8e8e8" stroke="#777" stroke-width="0.7"/><path d="M6.5 7.5 L12 1 Q14 -0.5 15 1 Q15.5 2.5 14 4 L7.5 8.5Z" fill="#2a80d8" stroke="#1a5aa0" stroke-width="0.7"/><path d="M12 10 V14 Q12 15.5 10.5 15" stroke="#111" stroke-width="1.3" fill="none"/></g><g transform="translate(95,595.5)"><path d="M1.5 4 L7 14 H1.5Z M14.5 4 L9 14 H14.5Z" fill="#5a70c8"/></g><g transform="translate(123,595.5)"><circle cx="8" cy="10.5" r="3.5" fill="none" stroke="#b04040" stroke-width="1.2"/><path d="M3 2 Q4 6 8 7 Q12 6 13 2" fill="none" stroke="#b04040" stroke-width="1.2"/></g><g transform="translate(11,623.5)"><rect x="0.5" y="0.5" width="15" height="15" fill="#1a2a5a"/><path d="M2 2 L4 5 L6 2 M8 6 L10 9 L12 6 M3 9 L5 12 L7 9 M10 11 L12 14 L14 11 M11 2 L13 4" stroke="#c8d8e8" stroke-width="1.1" fill="none"/></g><g transform="translate(39,623.5)"><rect x="2.5" y="2.5" width="6" height="7" fill="none" stroke="#5a2a9a" stroke-width="1.1"/><rect x="7.5" y="6.5" width="6" height="7" fill="none" stroke="#b03050" stroke-width="1.1"/></g><g transform="translate(67,623.5)"><path d="M2 3 H14 V6 H10 V10 H14 V13 H2 V10 H6 V6 H2Z" fill="#d84818"/></g><g transform="translate(95,623.5)"><rect x="3" y="1.5" width="3" height="13" fill="#e8906a"/><rect x="8" y="4" width="4" height="2" fill="#2a1a3a"/><rect x="8" y="10" width="4" height="2" fill="#2a1a3a"/></g><g transform="translate(123,623.5)"><text x="6.5" y="11.5" font-family="Liberation Sans" font-size="6.5" font-weight="bold" text-anchor="middle" fill="#d8783a">CNT</text><path d="M14.5 15 V3 M12.5 5 L14.5 2.5 L16.5 5" stroke="#1a2a7a" stroke-width="1.2" fill="none"/></g><g transform="translate(11,651.5)"><text x="8" y="12.5" font-family="Liberation Sans" font-size="9.5" text-anchor="middle" fill="#c89060" letter-spacing="-0.3">ICJ</text></g><g transform="translate(39,651.5)"><rect x="2" y="1.5" width="12" height="3" fill="#8a7a70"/><rect x="6" y="1.5" width="4" height="3" fill="#d08040"/><path d="M3 11 L8 6 L13 11" fill="none" stroke="#a0a8b0" stroke-width="1.2"/><rect x="2" y="11.5" width="12" height="3.5" fill="#5a6a80"/></g><g transform="translate(67,651.5)"><rect x="1" y="2" width="12" height="1.5" fill="#b040b0"/><rect x="1" y="12.5" width="12" height="1.5" fill="#b040b0"/><text x="7" y="11" font-family="Liberation Sans" font-size="6.5" font-weight="bold" text-anchor="middle" fill="#c06030">HCD</text><path d="M14.8 15 V3 M13 5 L14.8 2.5 L16.5 5" stroke="#1a2a7a" stroke-width="1.1" fill="none"/></g><g transform="translate(95,651.5)"><text x="6.5" y="12.5" font-family="Liberation Sans" font-size="9.5" text-anchor="middle" fill="#c89060" letter-spacing="-0.5">ICJ</text><path d="M14.8 14 V3 M13 5 L14.8 2.5 L16.5 5" stroke="#1a2a7a" stroke-width="1.1" fill="none"/></g><g transform="translate(123,651.5)"><circle cx="8" cy="8" r="7.2" fill="#1a2a5a"/><path d="M3 6 L5 9 L7 6 M8 3 L10 6 L12 3 M6 10 L8 13 L10 10 M10 7 L12 10 L14 7" stroke="#c8d8e8" stroke-width="1.1" fill="none"/></g><g transform="translate(11,679.5)"><path d="M5.5 1 H10.5 V8 H13 L8 12 L3 8 H5.5Z" fill="#60c840" stroke="#2a8a1a" stroke-width="0.8"/><path d="M4 11 L12 15.5 M12 11 L4 15.5" stroke="#e05020" stroke-width="1.6"/></g><g transform="translate(39,679.5)"><rect x="1" y="1" width="7" height="7" fill="#40b040" stroke="#1a7a1a" stroke-width="0.6"/><rect x="8.5" y="8.5" width="7" height="7" fill="#d82010" stroke="#8a1010" stroke-width="0.6"/><path d="M10 3 H13 V6 M11.5 4.5 L13 6 L14.5 4.5 M6 13 H3 V10 M1.5 11.5 L3 10 L4.5 11.5" stroke="#223" stroke-width="1" fill="none"/></g><g transform="translate(67,679.5)"><rect x="1.5" y="6.5" width="12" height="8" fill="#e8f0f8" stroke="#5a7aa8"/><path d="M3.5 10 H11.5 M3.5 12.5 H11.5" stroke="#3a5a9a" stroke-width="1"/><path d="M5 6 Q7 2 12 3 L15 1.5 V6 L12 5 Q10 6 9 7Z" fill="#f0d070" stroke="#b8a060" stroke-width="0.5"/></g><g transform="translate(95,679.5)"><rect x="1.5" y="1.5" width="6" height="6" fill="#3a6ab8"/><rect x="1.5" y="4" width="6" height="1" fill="#8ab0e0"/><path d="M7.5 7.5 H14.5 V14.5 M7.5 7.5 V14.5 M7.5 11 H14.5" stroke="#a050b0" stroke-width="1.1" fill="none"/></g><g transform="translate(123,679.5)"><path d="M2 2 Q2 1 3 1.5 L4 2.5 L5 1.5 Q6 1 6 2 V4 Q6 6 4 6 Q2 6 2 4Z M10 10 Q10 9 11 9.5 L12 10.5 L13 9.5 Q14 9 14 10 V12 Q14 14 12 14 Q10 14 10 12Z" fill="none" stroke="#d040d0" stroke-width="1"/><path d="M9 2 H13 V6 M11.5 4.5 L13 6 L14.5 4.5 M7 13 H3 V9 M1.5 10.5 L3 9 L4.5 10.5" stroke="#223" stroke-width="1.1" fill="none"/></g><g transform="translate(11,707.5)"><rect x="1" y="2.5" width="14" height="4.5" fill="#e8a8c0"/><rect x="1" y="9" width="14" height="4.5" fill="#e8a8c0"/><g fill="#2a1050"><rect x="2.5" y="4" width="2" height="1.6"/><rect x="7" y="4" width="2" height="1.6"/><rect x="11.5" y="4" width="2" height="1.6"/><rect x="2.5" y="10.5" width="2" height="1.6"/><rect x="7" y="10.5" width="2" height="1.6"/><rect x="11.5" y="10.5" width="2" height="1.6"/></g></g><g transform="translate(39,707.5)"><defs><radialGradient id="rgb"><stop offset="0" stop-color="#2030f0"/><stop offset="1" stop-color="#b8c0e0"/></radialGradient></defs><rect x="0.5" y="0.5" width="15" height="15" fill="url(#rgb)" stroke="#222" stroke-width="1" stroke-dasharray="1.2 1"/></g><g transform="translate(67,707.5)"><path d="M3 14 H14 V3 L12 3 V5 L10 5 V7 L8 7 V9 L6 9 V11 L4 11 V12.5 L3 12.5Z" fill="#8a0a0a"/></g><g transform="translate(95,707.5)"><path d="M2 14 H14 V3Z" fill="#8a0a0a"/></g><g transform="translate(123,707.5)"><path d="M5.5 2 H10.5 L14 13.5 H2Z" fill="#1a7a1a"/><path d="M6.5 3.5 H9.5 L12 12.5 H4Z" fill="#8a0a0a"/></g><g transform="translate(11,735.5)"><circle cx="8" cy="8" r="7" fill="#e8eef4" stroke="#9aa4b0" stroke-width="1.2"/><path d="M8 3.5 L9.3 5 L11.2 4.8 L11.2 6.7 L12.5 8 L11.2 9.3 L11.2 11.2 L9.3 11 L8 12.5 L6.7 11 L4.8 11.2 L4.8 9.3 L3.5 8 L4.8 6.7 L4.8 4.8 L6.7 5Z" fill="#dfe8f0" stroke="#a8c0d0" stroke-width="0.9"/></g></svg>
<div class="a" style="left:159px;top:75px;width:7px;height:864px;background:#ecedf9"></div>
<div class="a" style="left:166px;top:75px;width:766px;height:863px;background:#a0a0a0"></div>
<div class="a" style="left:166px;top:75px;width:1px;height:863px;background:#707070"></div>
<div class="a" style="left:167px;top:77px;width:17px;height:16px;background:#f0f0f0"></div>
<svg class="a" style="left:186px;top:77px" width="746" height="16" viewBox="0 0 746 16"><rect width="746" height="16" fill="#fff"/><line x1="0.5" y1="0" x2="0.5" y2="16" stroke="#000" stroke-width="1"/><line x1="10.5" y1="10" x2="10.5" y2="15" stroke="#000" stroke-width="1"/><line x1="20.5" y1="10" x2="20.5" y2="15" stroke="#000" stroke-width="1"/><line x1="30.5" y1="10" x2="30.5" y2="15" stroke="#000" stroke-width="1"/><line x1="40.5" y1="10" x2="40.5" y2="15" stroke="#000" stroke-width="1"/><line x1="50.5" y1="0" x2="50.5" y2="16" stroke="#000" stroke-width="1"/><text x="49.5" y="9" font-size="9" text-anchor="end" font-family="Liberation Sans" fill="#000" stroke="#000" stroke-width="0.25">50</text><line x1="60.5" y1="10" x2="60.5" y2="15" stroke="#000" stroke-width="1"/><line x1="70.5" y1="10" x2="70.5" y2="15" stroke="#000" stroke-width="1"/><line x1="80.5" y1="10" x2="80.5" y2="15" stroke="#000" stroke-width="1"/><line x1="90.5" y1="10" x2="90.5" y2="15" stroke="#000" stroke-width="1"/><line x1="100.5" y1="0" x2="100.5" y2="16" stroke="#000" stroke-width="1"/><text x="99.5" y="9" font-size="9" text-anchor="end" font-family="Liberation Sans" fill="#000" stroke="#000" stroke-width="0.25">100</text><line x1="110.5" y1="10" x2="110.5" y2="15" stroke="#000" stroke-width="1"/><line x1="120.5" y1="10" x2="120.5" y2="15" stroke="#000" stroke-width="1"/><line x1="130.5" y1="10" x2="130.5" y2="15" stroke="#000" stroke-width="1"/><line x1="140.5" y1="10" x2="140.5" y2="15" stroke="#000" stroke-width="1"/><line x1="150.5" y1="0" x2="150.5" y2="16" stroke="#000" stroke-width="1"/><text x="149.5" y="9" font-size="9" text-anchor="end" font-family="Liberation Sans" fill="#000" stroke="#000" stroke-width="0.25">150</text><line x1="160.5" y1="10" x2="160.5" y2="15" stroke="#000" stroke-width="1"/><line x1="170.5" y1="10" x2="170.5" y2="15" stroke="#000" stroke-width="1"/><line x1="180.5" y1="10" x2="180.5" y2="15" stroke="#000" stroke-width="1"/><line x1="190.5" y1="10" x2="190.5" y2="15" stroke="#000" stroke-width="1"/><line x1="200.5" y1="0" x2="200.5" y2="16" stroke="#000" stroke-width="1"/><text x="199.5" y="9" font-size="9" text-anchor="end" font-family="Liberation Sans" fill="#000" stroke="#000" stroke-width="0.25">200</text><line x1="210.5" y1="10" x2="210.5" y2="15" stroke="#000" stroke-width="1"/><line x1="220.5" y1="10" x2="220.5" y2="15" stroke="#000" stroke-width="1"/><line x1="230.5" y1="10" x2="230.5" y2="15" stroke="#000" stroke-width="1"/><line x1="240.5" y1="10" x2="240.5" y2="15" stroke="#000" stroke-width="1"/><line x1="250.5" y1="0" x2="250.5" y2="16" stroke="#000" stroke-width="1"/><text x="249.5" y="9" font-size="9" text-anchor="end" font-family="Liberation Sans" fill="#000" stroke="#000" stroke-width="0.25">250</text><line x1="260.5" y1="10" x2="260.5" y2="15" stroke="#000" stroke-width="1"/><line x1="270.5" y1="10" x2="270.5" y2="15" stroke="#000" stroke-width="1"/><line x1="280.5" y1="10" x2="280.5" y2="15" stroke="#000" stroke-width="1"/><line x1="290.5" y1="10" x2="290.5" y2="15" stroke="#000" stroke-width="1"/><line x1="300.5" y1="0" x2="300.5" y2="16" stroke="#000" stroke-width="1"/><text x="299.5" y="9" font-size="9" text-anchor="end" font-family="Liberation Sans" fill="#000" stroke="#000" stroke-width="0.25">300</text><line x1="310.5" y1="10" x2="310.5" y2="15" stroke="#000" stroke-width="1"/><line x1="320.5" y1="10" x2="320.5" y2="15" stroke="#000" stroke-width="1"/><line x1="330.5" y1="10" x2="330.5" y2="15" stroke="#000" stroke-width="1"/><line x1="340.5" y1="10" x2="340.5" y2="15" stroke="#000" stroke-width="1"/><line x1="350.5" y1="0" x2="350.5" y2="16" stroke="#000" stroke-width="1"/><text x="349.5" y="9" font-size="9" text-anchor="end" font-family="Liberation Sans" fill="#000" stroke="#000" stroke-width="0.25">350</text><line x1="360.5" y1="10" x2="360.5" y2="15" stroke="#000" stroke-width="1"/><line x1="370.5" y1="10" x2="370.5" y2="15" stroke="#000" stroke-width="1"/><line x1="380.5" y1="10" x2="380.5" y2="15" stroke="#000" stroke-width="1"/><line x1="390.5" y1="10" x2="390.5" y2="15" stroke="#000" stroke-width="1"/><line x1="400.5" y1="0" x2="400.5" y2="16" stroke="#000" stroke-width="1"/><text x="399.5" y="9" font-size="9" text-anchor="end" font-family="Liberation Sans" fill="#000" stroke="#000" stroke-width="0.25">400</text><line x1="410.5" y1="10" x2="410.5" y2="15" stroke="#000" stroke-width="1"/><line x1="420.5" y1="10" x2="420.5" y2="15" stroke="#000" stroke-width="1"/><line x1="430.5" y1="10" x2="430.5" y2="15" stroke="#000" stroke-width="1"/><line x1="440.5" y1="10" x2="440.5" y2="15" stroke="#000" stroke-width="1"/><line x1="450.5" y1="0" x2="450.5" y2="16" stroke="#000" stroke-width="1"/><text x="449.5" y="9" font-size="9" text-anchor="end" font-family="Liberation Sans" fill="#000" stroke="#000" stroke-width="0.25">450</text><line x1="460.5" y1="10" x2="460.5" y2="15" stroke="#000" stroke-width="1"/><line x1="470.5" y1="10" x2="470.5" y2="15" stroke="#000" stroke-width="1"/><line x1="480.5" y1="10" x2="480.5" y2="15" stroke="#000" stroke-width="1"/><line x1="490.5" y1="10" x2="490.5" y2="15" stroke="#000" stroke-width="1"/><line x1="500.5" y1="0" x2="500.5" y2="16" stroke="#000" stroke-width="1"/><text x="499.5" y="9" font-size="9" text-anchor="end" font-family="Liberation Sans" fill="#000" stroke="#000" stroke-width="0.25">500</text><line x1="510.5" y1="10" x2="510.5" y2="15" stroke="#000" stroke-width="1"/><line x1="520.5" y1="10" x2="520.5" y2="15" stroke="#000" stroke-width="1"/><line x1="530.5" y1="10" x2="530.5" y2="15" stroke="#000" stroke-width="1"/><line x1="540.5" y1="10" x2="540.5" y2="15" stroke="#000" stroke-width="1"/><line x1="550.5" y1="0" x2="550.5" y2="16" stroke="#000" stroke-width="1"/><text x="549.5" y="9" font-size="9" text-anchor="end" font-family="Liberation Sans" fill="#000" stroke="#000" stroke-width="0.25">550</text><line x1="560.5" y1="10" x2="560.5" y2="15" stroke="#000" stroke-width="1"/><line x1="570.5" y1="10" x2="570.5" y2="15" stroke="#000" stroke-width="1"/><line x1="580.5" y1="10" x2="580.5" y2="15" stroke="#000" stroke-width="1"/><line x1="590.5" y1="10" x2="590.5" y2="15" stroke="#000" stroke-width="1"/><line x1="600.5" y1="0" x2="600.5" y2="16" stroke="#000" stroke-width="1"/><text x="599.5" y="9" font-size="9" text-anchor="end" font-family="Liberation Sans" fill="#000" stroke="#000" stroke-width="0.25">600</text><line x1="610.5" y1="10" x2="610.5" y2="15" stroke="#000" stroke-width="1"/><line x1="620.5" y1="10" x2="620.5" y2="15" stroke="#000" stroke-width="1"/><line x1="630.5" y1="10" x2="630.5" y2="15" stroke="#000" stroke-width="1"/><line x1="640.5" y1="10" x2="640.5" y2="15" stroke="#000" stroke-width="1"/><line x1="650.5" y1="0" x2="650.5" y2="16" stroke="#000" stroke-width="1"/><text x="649.5" y="9" font-size="9" text-anchor="end" font-family="Liberation Sans" fill="#000" stroke="#000" stroke-width="0.25">650</text><line x1="660.5" y1="10" x2="660.5" y2="15" stroke="#000" stroke-width="1"/><line x1="670.5" y1="10" x2="670.5" y2="15" stroke="#000" stroke-width="1"/><line x1="680.5" y1="10" x2="680.5" y2="15" stroke="#000" stroke-width="1"/><line x1="690.5" y1="10" x2="690.5" y2="15" stroke="#000" stroke-width="1"/><line x1="700.5" y1="0" x2="700.5" y2="16" stroke="#000" stroke-width="1"/><text x="699.5" y="9" font-size="9" text-anchor="end" font-family="Liberation Sans" fill="#000" stroke="#000" stroke-width="0.25">700</text><line x1="710.5" y1="10" x2="710.5" y2="15" stroke="#000" stroke-width="1"/><line x1="720.5" y1="10" x2="720.5" y2="15" stroke="#000" stroke-width="1"/><line x1="730.5" y1="10" x2="730.5" y2="15" stroke="#000" stroke-width="1"/><line x1="740.5" y1="10" x2="740.5" y2="15" stroke="#000" stroke-width="1"/><line x1="750.5" y1="0" x2="750.5" y2="16" stroke="#000" stroke-width="1"/><text x="749.5" y="9" font-size="9" text-anchor="end" font-family="Liberation Sans" fill="#000" stroke="#000" stroke-width="0.25">750</text><line x1="561.5" y1="0" x2="561.5" y2="16" stroke="#000" stroke-width="1"/></svg>
<svg class="a" style="left:167px;top:95px" width="17" height="842" viewBox="0 0 17 842"><rect width="17" height="842" fill="#fff"/><line x1="10" y1="813.5" x2="16" y2="813.5" stroke="#000"/><line x1="10" y1="803.5" x2="16" y2="803.5" stroke="#000"/><line x1="10" y1="793.5" x2="16" y2="793.5" stroke="#000"/><line x1="10" y1="783.5" x2="16" y2="783.5" stroke="#000"/><line x1="0" y1="773.5" x2="16" y2="773.5" stroke="#000"/><text transform="translate(9,773) rotate(-90)" x="0" y="0" font-size="9.5" font-family="Liberation Sans" fill="#000" stroke="#000" stroke-width="0.25">50</text><line x1="10" y1="763.5" x2="16" y2="763.5" stroke="#000"/><line x1="10" y1="753.5" x2="16" y2="753.5" stroke="#000"/><line x1="10" y1="743.5" x2="16" y2="743.5" stroke="#000"/><line x1="10" y1="733.5" x2="16" y2="733.5" stroke="#000"/><line x1="0" y1="723.5" x2="16" y2="723.5" stroke="#000"/><text transform="translate(9,723) rotate(-90)" x="0" y="0" font-size="9.5" font-family="Liberation Sans" fill="#000" stroke="#000" stroke-width="0.25">100</text><line x1="10" y1="713.5" x2="16" y2="713.5" stroke="#000"/><line x1="10" y1="703.5" x2="16" y2="703.5" stroke="#000"/><line x1="10" y1="693.5" x2="16" y2="693.5" stroke="#000"/><line x1="10" y1="683.5" x2="16" y2="683.5" stroke="#000"/><line x1="0" y1="673.5" x2="16" y2="673.5" stroke="#000"/><text transform="translate(9,673) rotate(-90)" x="0" y="0" font-size="9.5" font-family="Liberation Sans" fill="#000" stroke="#000" stroke-width="0.25">150</text><line x1="10" y1="663.5" x2="16" y2="663.5" stroke="#000"/><line x1="10" y1="653.5" x2="16" y2="653.5" stroke="#000"/><line x1="10" y1="643.5" x2="16" y2="643.5" stroke="#000"/><line x1="10" y1="633.5" x2="16" y2="633.5" stroke="#000"/><line x1="0" y1="623.5" x2="16" y2="623.5" stroke="#000"/><text transform="translate(9,623) rotate(-90)" x="0" y="0" font-size="9.5" font-family="Liberation Sans" fill="#000" stroke="#000" stroke-width="0.25">200</text><line x1="10" y1="613.5" x2="16" y2="613.5" stroke="#000"/><line x1="10" y1="603.5" x2="16" y2="603.5" stroke="#000"/><line x1="10" y1="593.5" x2="16" y2="593.5" stroke="#000"/><line x1="10" y1="583.5" x2="16" y2="583.5" stroke="#000"/><line x1="0" y1="573.5" x2="16" y2="573.5" stroke="#000"/><text transform="translate(9,573) rotate(-90)" x="0" y="0" font-size="9.5" font-family="Liberation Sans" fill="#000" stroke="#000" stroke-width="0.25">250</text><line x1="10" y1="563.5" x2="16" y2="563.5" stroke="#000"/><line x1="10" y1="553.5" x2="16" y2="553.5" stroke="#000"/><line x1="10" y1="543.5" x2="16" y2="543.5" stroke="#000"/><line x1="10" y1="533.5" x2="16" y2="533.5" stroke="#000"/><line x1="0" y1="523.5" x2="16" y2="523.5" stroke="#000"/><text transform="translate(9,523) rotate(-90)" x="0" y="0" font-size="9.5" font-family="Liberation Sans" fill="#000" stroke="#000" stroke-width="0.25">300</text><line x1="10" y1="513.5" x2="16" y2="513.5" stroke="#000"/><line x1="10" y1="503.5" x2="16" y2="503.5" stroke="#000"/><line x1="10" y1="493.5" x2="16" y2="493.5" stroke="#000"/><line x1="10" y1="483.5" x2="16" y2="483.5" stroke="#000"/><line x1="0" y1="473.5" x2="16" y2="473.5" stroke="#000"/><text transform="translate(9,473) rotate(-90)" x="0" y="0" font-size="9.5" font-family="Liberation Sans" fill="#000" stroke="#000" stroke-width="0.25">350</text><line x1="10" y1="463.5" x2="16" y2="463.5" stroke="#000"/><line x1="10" y1="453.5" x2="16" y2="453.5" stroke="#000"/><line x1="10" y1="443.5" x2="16" y2="443.5" stroke="#000"/><line x1="10" y1="433.5" x2="16" y2="433.5" stroke="#000"/><line x1="0" y1="423.5" x2="16" y2="423.5" stroke="#000"/><text transform="translate(9,423) rotate(-90)" x="0" y="0" font-size="9.5" font-family="Liberation Sans" fill="#000" stroke="#000" stroke-width="0.25">400</text><line x1="10" y1="413.5" x2="16" y2="413.5" stroke="#000"/><line x1="10" y1="403.5" x2="16" y2="403.5" stroke="#000"/><line x1="10" y1="393.5" x2="16" y2="393.5" stroke="#000"/><line x1="10" y1="383.5" x2="16" y2="383.5" stroke="#000"/><line x1="0" y1="373.5" x2="16" y2="373.5" stroke="#000"/><text transform="translate(9,373) rotate(-90)" x="0" y="0" font-size="9.5" font-family="Liberation Sans" fill="#000" stroke="#000" stroke-width="0.25">450</text><line x1="10" y1="363.5" x2="16" y2="363.5" stroke="#000"/><line x1="10" y1="353.5" x2="16" y2="353.5" stroke="#000"/><line x1="10" y1="343.5" x2="16" y2="343.5" stroke="#000"/><line x1="0" y1="323.5" x2="16" y2="323.5" stroke="#000"/><text transform="translate(9,323) rotate(-90)" x="0" y="0" font-size="9.5" font-family="Liberation Sans" fill="#000" stroke="#000" stroke-width="0.25">500</text><line x1="10" y1="313.5" x2="16" y2="313.5" stroke="#000"/><line x1="10" y1="303.5" x2="16" y2="303.5" stroke="#000"/><line x1="10" y1="293.5" x2="16" y2="293.5" stroke="#000"/><line x1="10" y1="283.5" x2="16" y2="283.5" stroke="#000"/><line x1="0" y1="273.5" x2="16" y2="273.5" stroke="#000"/><text transform="translate(9,273) rotate(-90)" x="0" y="0" font-size="9.5" font-family="Liberation Sans" fill="#000" stroke="#000" stroke-width="0.25">550</text><line x1="10" y1="263.5" x2="16" y2="263.5" stroke="#000"/><line x1="10" y1="253.5" x2="16" y2="253.5" stroke="#000"/><line x1="10" y1="243.5" x2="16" y2="243.5" stroke="#000"/><line x1="10" y1="233.5" x2="16" y2="233.5" stroke="#000"/><line x1="0" y1="223.5" x2="16" y2="223.5" stroke="#000"/><text transform="translate(9,223) rotate(-90)" x="0" y="0" font-size="9.5" font-family="Liberation Sans" fill="#000" stroke="#000" stroke-width="0.25">600</text><line x1="10" y1="213.5" x2="16" y2="213.5" stroke="#000"/><line x1="10" y1="203.5" x2="16" y2="203.5" stroke="#000"/><line x1="10" y1="193.5" x2="16" y2="193.5" stroke="#000"/><line x1="10" y1="183.5" x2="16" y2="183.5" stroke="#000"/><line x1="0" y1="173.5" x2="16" y2="173.5" stroke="#000"/><text transform="translate(9,173) rotate(-90)" x="0" y="0" font-size="9.5" font-family="Liberation Sans" fill="#000" stroke="#000" stroke-width="0.25">650</text><line x1="10" y1="163.5" x2="16" y2="163.5" stroke="#000"/><line x1="10" y1="153.5" x2="16" y2="153.5" stroke="#000"/><line x1="10" y1="143.5" x2="16" y2="143.5" stroke="#000"/><line x1="10" y1="133.5" x2="16" y2="133.5" stroke="#000"/><line x1="0" y1="123.5" x2="16" y2="123.5" stroke="#000"/><text transform="translate(9,123) rotate(-90)" x="0" y="0" font-size="9.5" font-family="Liberation Sans" fill="#000" stroke="#000" stroke-width="0.25">700</text><line x1="10" y1="113.5" x2="16" y2="113.5" stroke="#000"/><line x1="10" y1="103.5" x2="16" y2="103.5" stroke="#000"/><line x1="10" y1="93.5" x2="16" y2="93.5" stroke="#000"/><line x1="10" y1="83.5" x2="16" y2="83.5" stroke="#000"/><line x1="0" y1="73.5" x2="16" y2="73.5" stroke="#000"/><text transform="translate(9,73) rotate(-90)" x="0" y="0" font-size="9.5" font-family="Liberation Sans" fill="#000" stroke="#000" stroke-width="0.25">750</text><line x1="10" y1="63.5" x2="16" y2="63.5" stroke="#000"/><line x1="10" y1="53.5" x2="16" y2="53.5" stroke="#000"/><line x1="10" y1="43.5" x2="16" y2="43.5" stroke="#000"/><line x1="10" y1="33.5" x2="16" y2="33.5" stroke="#000"/><line x1="0" y1="23.5" x2="16" y2="23.5" stroke="#000"/><text transform="translate(9,23) rotate(-90)" x="0" y="0" font-size="9.5" font-family="Liberation Sans" fill="#000" stroke="#000" stroke-width="0.25">800</text><line x1="10" y1="13.5" x2="16" y2="13.5" stroke="#000"/><line x1="10" y1="3.5" x2="16" y2="3.5" stroke="#000"/><line x1="0" y1="333.5" x2="10" y2="333.5" stroke="#000"/></svg>
<div class="a" style="left:186px;top:95px;width:746px;height:823px;background:#000"></div>
<svg class="a" style="left:186px;top:95px" width="746" height="823" viewBox="186 95 746 823" shape-rendering="crispEdges"><defs>
<pattern id="pg" width="2" height="2" patternUnits="userSpaceOnUse"><rect width="2" height="2" fill="#96ea3c"/><rect y="1" width="2" height="1" fill="#5cae18"/></pattern>
<pattern id="pl" width="2" height="2" patternUnits="userSpaceOnUse"><rect width="2" height="2" fill="#d0ccdc"/><rect width="1" height="1" fill="#857695"/></pattern>
<pattern id="pp" width="3" height="3" patternUnits="userSpaceOnUse"><rect width="3" height="3" fill="#8a2d96"/><rect width="1" height="1" fill="#b03aa0"/><rect x="1" y="2" width="1" height="1" fill="#6a3aa8"/></pattern>
<pattern id="po" width="2" height="2" patternUnits="userSpaceOnUse"><rect width="2" height="2" fill="#737d4c"/><rect y="1" width="2" height="1" fill="#5f6a3e"/></pattern>
<pattern id="pk" width="2" height="2" patternUnits="userSpaceOnUse"><rect width="2" height="2" fill="#ecc8d8"/><rect width="1" height="2" fill="#86304e"/></pattern>
</defs><rect x="260" y="392" width="65" height="1" fill="#e6dcd6"/><rect x="260" y="400" width="2" height="2" fill="#f0f0f0"/><rect x="263" y="400" width="2" height="2" fill="#f0f0f0"/><rect x="266" y="399" width="3" height="3" fill="#f0f0f0"/><rect x="270" y="400" width="2" height="2" fill="#f0f0f0"/><rect x="273" y="400" width="2" height="2" fill="#f0f0f0"/><rect x="276" y="401" width="1" height="1" fill="#f0f0f0"/><rect x="279" y="400" width="1" height="2" fill="#f0f0f0"/><rect x="282" y="401" width="1" height="1" fill="#f0f0f0"/><rect x="285" y="400" width="1" height="2" fill="#f0f0f0"/><rect x="289" y="400" width="2" height="2" fill="#f0f0f0"/><rect x="292" y="399" width="3" height="3" fill="#f0f0f0"/><rect x="296" y="400" width="2" height="2" fill="#f0f0f0"/><rect x="300" y="397" width="1" height="5" fill="#f0f0f0"/><rect x="302" y="400" width="2" height="2" fill="#f0f0f0"/><rect x="305" y="401" width="1" height="1" fill="#f0f0f0"/><rect x="307" y="400" width="2" height="2" fill="#f0f0f0"/><rect x="310" y="398" width="1" height="4" fill="#f0f0f0"/><rect x="313" y="400" width="1" height="2" fill="#f0f0f0"/><rect x="316" y="398" width="3" height="4" fill="#f0f0f0"/><rect x="320" y="399" width="2" height="3" fill="#f0f0f0"/><rect x="324" y="401" width="1" height="1" fill="#f0f0f0"/><rect x="260" y="394" width="1" height="1" fill="#999"/><rect x="275" y="394" width="2" height="1" fill="#888"/><rect x="301" y="394" width="3" height="1" fill="#aaa"/><rect x="243" y="452" width="69" height="1" fill="#e6dcd6"/><rect x="243" y="460" width="2" height="2" fill="#f0f0f0"/><rect x="246" y="460" width="2" height="2" fill="#f0f0f0"/><rect x="249" y="459" width="3" height="3" fill="#f0f0f0"/><rect x="253" y="460" width="2" height="2" fill="#f0f0f0"/><rect x="256" y="460" width="2" height="2" fill="#f0f0f0"/><rect x="259" y="460" width="1" height="2" fill="#f0f0f0"/><rect x="262" y="459" width="1" height="3" fill="#f0f0f0"/><rect x="265" y="461" width="1" height="1" fill="#f0f0f0"/><rect x="268" y="460" width="2" height="2" fill="#f0f0f0"/><rect x="271" y="459" width="3" height="3" fill="#f0f0f0"/><rect x="275" y="460" width="2" height="2" fill="#f0f0f0"/><rect x="278" y="459" width="2" height="3" fill="#f0f0f0"/><rect x="282" y="458" width="1" height="4" fill="#f0f0f0"/><rect x="284" y="460" width="2" height="2" fill="#f0f0f0"/><rect x="287" y="461" width="1" height="1" fill="#f0f0f0"/><rect x="289" y="459" width="2" height="3" fill="#f0f0f0"/><rect x="293" y="458" width="1" height="4" fill="#f0f0f0"/><rect x="296" y="460" width="1" height="2" fill="#f0f0f0"/><rect x="299" y="457" width="1" height="5" fill="#f0f0f0"/><rect x="301" y="458" width="3" height="4" fill="#f0f0f0"/><rect x="305" y="459" width="2" height="3" fill="#f0f0f0"/><rect x="309" y="461" width="1" height="1" fill="#f0f0f0"/><rect x="243" y="463" width="2" height="1" fill="#6a8a6a"/><rect x="247" y="463" width="2" height="1" fill="#6a8a6a"/><rect x="251" y="463" width="2" height="1" fill="#6a8a6a"/><rect x="255" y="463" width="2" height="1" fill="#6a8a6a"/><rect x="259" y="463" width="2" height="1" fill="#6a8a6a"/><rect x="263" y="463" width="2" height="1" fill="#6a8a6a"/><rect x="267" y="463" width="2" height="1" fill="#6a8a6a"/><rect x="271" y="463" width="2" height="1" fill="#6a8a6a"/><rect x="275" y="463" width="2" height="1" fill="#6a8a6a"/><rect x="279" y="463" width="2" height="1" fill="#6a8a6a"/><rect x="283" y="463" width="2" height="1" fill="#6a8a6a"/><rect x="287" y="463" width="2" height="1" fill="#6a8a6a"/><rect x="291" y="463" width="2" height="1" fill="#6a8a6a"/><rect x="295" y="463" width="2" height="1" fill="#6a8a6a"/><rect x="299" y="463" width="2" height="1" fill="#6a8a6a"/><rect x="303" y="463" width="2" height="1" fill="#6a8a6a"/><rect x="307" y="463" width="2" height="1" fill="#6a8a6a"/><rect x="236" y="413" width="8" height="1" fill="#ddd"/><rect x="236" y="416" width="2" height="6" fill="#c8d8b0"/><rect x="239" y="417" width="2" height="2" fill="#eee"/><rect x="242" y="417" width="2" height="2" fill="#eee"/><rect x="239" y="420" width="2" height="2" fill="#eee"/><rect x="242" y="420" width="2" height="2" fill="#eee"/><rect x="236" y="425" width="2" height="1" fill="#ccc"/><rect x="239" y="425" width="2" height="1" fill="#ccc"/><rect x="242" y="425" width="2" height="1" fill="#ccc"/><rect x="290" y="426" width="8" height="1" fill="#ddd"/><rect x="290" y="429" width="2" height="6" fill="#c8d8b0"/><rect x="293" y="430" width="2" height="2" fill="#eee"/><rect x="296" y="430" width="2" height="2" fill="#eee"/><rect x="293" y="433" width="2" height="2" fill="#eee"/><rect x="296" y="433" width="2" height="2" fill="#eee"/><rect x="290" y="438" width="2" height="1" fill="#ccc"/><rect x="293" y="438" width="2" height="1" fill="#ccc"/><rect x="296" y="438" width="2" height="1" fill="#ccc"/><rect x="257" y="444" width="6" height="6" fill="#34b44a"/><rect x="259" y="446" width="2" height="2" fill="#7de08a"/><rect x="243" y="444" width="3" height="1" fill="#ccc"/><rect x="243" y="447" width="3" height="1" fill="#999"/><rect x="293" y="447" width="3" height="2" fill="#888"/><polygon points="215,466 397,466 397,494 354,536 258,536 215,494" fill="url(#pl)" shape-rendering="auto"/><polygon points="258,536 354,536 354,578 367,578 367,617 378,617 378,657 388,657 388,697 397,697 397,717 215,717 215,697 225,697 225,657 235,657 235,617 245,617 245,578 258,578" fill="url(#pg)"/><rect x="258" y="536" width="1" height="42" fill="#d4e82c"/><rect x="245" y="578" width="1" height="39" fill="#d4e82c"/><rect x="235" y="617" width="1" height="40" fill="#d4e82c"/><rect x="225" y="657" width="1" height="40" fill="#d4e82c"/><rect x="215" y="697" width="1" height="20" fill="#d4e82c"/><rect x="353" y="536" width="1" height="42" fill="#d4e82c"/><rect x="366" y="578" width="1" height="39" fill="#d4e82c"/><rect x="377" y="617" width="1" height="40" fill="#d4e82c"/><rect x="387" y="657" width="1" height="40" fill="#d4e82c"/><rect x="396" y="697" width="1" height="20" fill="#d4e82c"/><rect x="245" y="577" width="13" height="1" fill="#8a7a98"/><rect x="245" y="578" width="13" height="1" fill="#ecdca0"/><rect x="235" y="616" width="10" height="1" fill="#8a7a98"/><rect x="235" y="617" width="10" height="1" fill="#ecdca0"/><rect x="225" y="656" width="10" height="1" fill="#8a7a98"/><rect x="225" y="657" width="10" height="1" fill="#ecdca0"/><rect x="215" y="696" width="10" height="1" fill="#8a7a98"/><rect x="215" y="697" width="10" height="1" fill="#ecdca0"/><rect x="354" y="577" width="13" height="1" fill="#8a7a98"/><rect x="354" y="578" width="13" height="1" fill="#ecdca0"/><rect x="367" y="616" width="11" height="1" fill="#8a7a98"/><rect x="367" y="617" width="11" height="1" fill="#ecdca0"/><rect x="378" y="656" width="10" height="1" fill="#8a7a98"/><rect x="378" y="657" width="10" height="1" fill="#ecdca0"/><rect x="388" y="696" width="9" height="1" fill="#8a7a98"/><rect x="388" y="697" width="9" height="1" fill="#ecdca0"/><polygon points="302.7,591 300.0,593 297.9,596 296.0,600 293.3,610 291.1,620 289.5,630 287.9,640 285.7,660 284.5,680 285.2,695 286.9,705 289.0,712 291.0,717 322.0,717 324.0,712 326.1,705 327.8,695 328.5,680 327.3,660 325.1,640 323.5,630 321.9,620 319.7,610 317.0,600 315.1,596 313.0,593 310.3,591" fill="url(#pp)" stroke="#5a2a5a" stroke-width="0.7" shape-rendering="auto"/><rect x="290" y="716" width="32" height="1" fill="#c07050"/><text x="324.5" y="552.5" font-family="Liberation Serif" font-weight="bold" font-size="20.5" letter-spacing="2.6" fill="#2a56c8" stroke="#1c3c8c" stroke-width="0.35" shape-rendering="auto">40</text><path d="M274 717 L336 717 C330 722 324 732 321 740 L291 740 C288 732 282 722 274 717Z" fill="url(#pg)" shape-rendering="auto"/><path d="M215 740 L282 740 C276 745 272 751 271 757 L215 757Z" fill="url(#pg)" shape-rendering="auto"/><rect x="271" y="757" width="126" height="1" fill="#c0a890"/><path d="M331 758 L397 758 L397 774 L342 774 C341 767 337 761 331 758Z" fill="url(#pg)" shape-rendering="auto"/><rect x="271" y="777" width="71" height="5" fill="#c4d6e2"/><rect x="271" y="782" width="71" height="2" fill="#b06428"/><rect x="271" y="784" width="71" height="4" fill="#d8d0c0"/><rect x="271" y="788" width="71" height="1" fill="#7a1a2a"/><rect x="271" y="789" width="71" height="4" fill="#dcd0dc"/><rect x="216" y="785" width="1" height="1" fill="#aaa"/><rect x="220" y="785" width="1" height="1" fill="#aaa"/><rect x="224" y="785" width="1" height="1" fill="#aaa"/><rect x="228" y="785" width="1" height="1" fill="#aaa"/><rect x="232" y="785" width="1" height="1" fill="#aaa"/><rect x="236" y="785" width="1" height="1" fill="#aaa"/><rect x="240" y="785" width="1" height="1" fill="#aaa"/><rect x="244" y="785" width="1" height="1" fill="#aaa"/><rect x="248" y="785" width="1" height="1" fill="#aaa"/><rect x="252" y="785" width="1" height="1" fill="#aaa"/><rect x="256" y="785" width="1" height="1" fill="#aaa"/><rect x="260" y="785" width="1" height="1" fill="#aaa"/><rect x="264" y="785" width="1" height="1" fill="#aaa"/><rect x="268" y="785" width="1" height="1" fill="#aaa"/><polygon points="215,797 271,797 271,834 215,884" fill="url(#po)"/><rect x="215" y="796" width="56" height="1" fill="#7a3030"/><polygon points="342,796 397,796 397,884 342,835" fill="url(#pg)"/><rect x="215" y="885" width="56" height="2" fill="#8a9a80"/><rect x="215" y="887" width="56" height="1" fill="#1a3010"/><rect x="215" y="891" width="56" height="3" fill="#c8dce8"/><rect x="215" y="894" width="56" height="2" fill="#5a0a14"/><rect x="342" y="885" width="55" height="4" fill="#d8e8c0"/><rect x="342" y="889" width="55" height="2" fill="#6a1020"/><rect x="307" y="895" width="35" height="2" fill="#28b0b0"/><rect x="307" y="897" width="90" height="3" fill="#a4a820"/><rect x="342" y="895" width="55" height="2" fill="#a4a820"/><rect x="215" y="901" width="56" height="4" fill="#a0a818"/><rect x="271" y="901" width="36" height="4" fill="#5aa88a"/><rect x="271" y="905" width="36" height="1" fill="#203080"/><rect x="215" y="905" width="56" height="3" fill="#dde6c0"/><rect x="215" y="907" width="182" height="2" fill="#dcc8dc"/><rect x="271" y="906" width="126" height="1" fill="#d8c8d8"/><rect x="215" y="909" width="182" height="9" fill="url(#pk)"/></svg>
<div class="a" style="left:186px;top:428px;width:746px;height:1px;background:#c4c4c4"></div>
<div class="a" style="left:747px;top:95px;width:1px;height:823px;background:#c4c4c4"></div>
<div class="a" style="left:747px;top:428px;width:1px;height:1px;background:#000"></div>
<svg class="a" style="left:186px;top:918px" width="746" height="22" viewBox="186 918 746 22"><rect x="186" y="918" width="746" height="2" fill="#a0a0a0"/><rect x="186" y="920" width="746" height="17" fill="#f0f0f0"/><rect x="185" y="918" width="2" height="19" fill="#8a8a8a"/><rect x="189" y="926" width="1.6" height="7" fill="#333"/><path d="M195 926 V933 L190.6 929.5Z" fill="#333"/><path d="M210 926 V933 L205.6 929.5Z" fill="#333"/><path d="M223 926 V933 L227.4 929.5Z" fill="#333"/><path d="M238 926 V933 L242.4 929.5Z" fill="#333"/><rect x="242.4" y="926" width="1.6" height="7" fill="#333"/><polygon points="844.1999999999999,919.5 915.1,919.5 906.9,936.5 852.4,936.5" fill="#f0f0f0" stroke="#3a3a3a" stroke-width="0.9"/><rect x="843.1999999999999" y="918.6" width="72.90000000000005" height="1.4" fill="#f0f0f0"/><polygon points="756.6,919.5 852.4,919.5 844.1999999999999,936.5 764.8000000000001,936.5" fill="#f0f0f0" stroke="#3a3a3a" stroke-width="0.9"/><rect x="755.6" y="918.6" width="97.79999999999991" height="1.4" fill="#f0f0f0"/><polygon points="667.6,919.5 764.8000000000001,919.5 756.6,936.5 675.8000000000001,936.5" fill="#f0f0f0" stroke="#3a3a3a" stroke-width="0.9"/><rect x="666.6" y="918.6" width="99.2" height="1.4" fill="#f0f0f0"/><polygon points="537.6,919.5 675.8000000000001,919.5 667.6,936.5 545.8000000000001,936.5" fill="#f0f0f0" stroke="#3a3a3a" stroke-width="0.9"/><rect x="536.6" y="918.6" width="140.2" height="1.4" fill="#f0f0f0"/><polygon points="453.5,919.5 545.8000000000001,919.5 537.6,936.5 461.70000000000005,936.5" fill="#f0f0f0" stroke="#3a3a3a" stroke-width="0.9"/><rect x="452.5" y="918.6" width="94.30000000000003" height="1.4" fill="#f0f0f0"/><polygon points="390.4,919.5 461.70000000000005,919.5 453.5,936.5 398.6,936.5" fill="#f0f0f0" stroke="#3a3a3a" stroke-width="0.9"/><rect x="389.4" y="918.6" width="73.30000000000003" height="1.4" fill="#f0f0f0"/><polygon points="312.9,919.5 398.6,919.5 390.4,936.5 321.1,936.5" fill="#f0f0f0" stroke="#3a3a3a" stroke-width="0.9"/><rect x="311.9" y="918.6" width="87.7" height="1.4" fill="#f0f0f0"/><polygon points="252.9,919.5 321.1,919.5 312.9,936.5 261.1,936.5" fill="#fbfbfb" stroke="#3a3a3a" stroke-width="0.9"/><rect x="251.9" y="918.6" width="70.2" height="1.4" fill="#fbfbfb"/><rect x="186" y="918" width="746" height="1.6" fill="#a0a0a0"/><text x="262" y="932" font-family="Liberation Sans" font-size="11.4" font-weight="bold" fill="#d4202a">Knit view</text><text x="324.5" y="932" font-family="Liberation Sans" font-size="11.4" font-weight="normal" fill="#1a1a1a">Intarsia view</text><text x="402" y="932" font-family="Liberation Sans" font-size="11.4" font-weight="normal" fill="#1a1a1a">JQD View</text><text x="463.6" y="932" font-family="Liberation Sans" font-size="11.4" font-weight="normal" fill="#1a1a1a">JQD area map</text><text x="547.7" y="932" font-family="Liberation Sans" font-size="11.4" font-weight="normal" fill="#1a1a1a">JQD yarn feeder group</text><text x="679" y="932" font-family="Liberation Sans" font-size="11.4" font-weight="normal" fill="#d4202a">Stitch drawing</text><text x="769.5" y="932" font-family="Liberation Sans" font-size="11.4" font-weight="normal" fill="#1a1a1a">AddYarn View</text><text x="857" y="932" font-family="Liberation Sans" font-size="11.4" font-weight="normal" fill="#1a1a1a">PAT view</text></svg>
<div class="a" style="left:0;top:945px;width:932px;height:18px;background:linear-gradient(#c6d0dd,#d6e1ec)"></div>
<span class="a tx" style="left:4px;top:948px;font-size:11.5px;color:#1e1e1e">Color</span>
<div class="a" style="left:0;top:963px;width:932px;height:50px;background:#f4f5f9;border-top:1px solid #8e9098;border-bottom:1px solid #c9ccd6"></div>
<div class="a" style="left:6px;top:968px;width:31px;height:32px;background:#cce4f7;border:1px solid #3d8ece"></div><svg class="a" style="left:12px;top:974px" width="20" height="20"><rect width="20" height="20" fill="#800000"/><path d="M3 6 H17" stroke="#f4c8c0" stroke-width="1.8" fill="none" stroke-linecap="square"/><circle cx="10" cy="12" r="3.8880000000000003" stroke="#f4c8c0" stroke-width="1.8" fill="none" stroke-linecap="square"/></svg><div class="lbl" style="left:7px;top:999px">1</div><div class="a" style="left:37px;top:968px;width:14px;height:16px;background:#f0f0f0"></div><div class="a" style="left:37px;top:984px;width:14px;height:15px;background:#ebebeb"></div><svg class="a" style="left:40px;top:974px" width="8" height="5"><path d="M0 4 H7 L3.5 0Z" fill="#111"/></svg><svg class="a" style="left:40px;top:989px" width="8" height="5"><path d="M0 0 H7 L3.5 4Z" fill="#111"/></svg><div class="a" style="left:69px;top:969px;width:27px;height:31px;background:#f8f8f8;border:1px solid #c8c8c8;border-radius:2px"></div><div class="a" style="left:82px;top:970px;width:1px;height:29px;background:#c8c8c8"></div><svg class="a" style="left:73px;top:981px" width="5" height="8"><path d="M4 0 V7 L0 3.5Z" fill="#111"/></svg><svg class="a" style="left:87px;top:981px" width="5" height="8"><path d="M0 0 V7 L4 3.5Z" fill="#111"/></svg><div class="a" style="left:133px;top:968px;width:32px;height:32px;background:#cce4f7;border:1px solid #3d8ece"></div><svg class="a" style="left:107px;top:974px" width="20" height="20"><rect width="20" height="20" fill="#000000"/></svg><div class="lbl" style="left:102px;top:999px">0</div><svg class="a" style="left:139px;top:974px" width="20" height="20"><rect width="20" height="20" fill="#800000"/><path d="M3 6 H17" stroke="#f4c8c0" stroke-width="1.8" fill="none" stroke-linecap="square"/><circle cx="10" cy="12" r="3.8880000000000003" stroke="#f4c8c0" stroke-width="1.8" fill="none" stroke-linecap="square"/></svg><div class="lbl" style="left:134px;top:999px">1</div><svg class="a" style="left:171px;top:974px" width="20" height="20"><rect width="20" height="20" fill="#0c8a14"/><circle cx="10" cy="8" r="3.8880000000000003" stroke="#c8f0c0" stroke-width="1.8" fill="none" stroke-linecap="square"/><path d="M3 15 H17" stroke="#c8f0c0" stroke-width="1.8" fill="none" stroke-linecap="square"/></svg><div class="lbl" style="left:166px;top:999px">2</div><svg class="a" style="left:203px;top:974px" width="20" height="20"><rect width="20" height="20" fill="#818214"/><circle cx="12" cy="6" r="3.24" stroke="#f0f0b0" stroke-width="1.8" fill="none" stroke-linecap="square"/><circle cx="8" cy="14" r="3.24" stroke="#f0f0b0" stroke-width="1.8" fill="none" stroke-linecap="square"/><path d="M3 10 H17" stroke="#f0f0b0" stroke-width="1"/></svg><div class="lbl" style="left:198px;top:999px">3</div><svg class="a" style="left:235px;top:974px" width="20" height="20"><rect width="20" height="20" fill="#000080"/><path d="M3 6 H6 L10 15 L14 6 H17" stroke="#d0d0ff" stroke-width="1.8" fill="none" stroke-linecap="square"/></svg><div class="lbl" style="left:230px;top:999px">4</div><svg class="a" style="left:267px;top:974px" width="20" height="20"><rect width="20" height="20" fill="#82108a"/><path d="M3 15 H6 L10 6 L14 15 H17" stroke="#ffc8ff" stroke-width="1.8" fill="none" stroke-linecap="square"/></svg><div class="lbl" style="left:262px;top:999px">5</div><svg class="a" style="left:299px;top:974px" width="20" height="20"><rect width="20" height="20" fill="#128080"/><circle cx="7" cy="13" r="3.24" stroke="#c0f0f0" stroke-width="1.8" fill="none" stroke-linecap="square"/><path d="M9 10 L12 5 L15 10 H18" stroke="#c0f0f0" stroke-width="1.8" fill="none" stroke-linecap="square"/></svg><div class="lbl" style="left:294px;top:999px">6</div><svg class="a" style="left:331px;top:974px" width="20" height="20"><rect width="20" height="20" fill="#b6b6b6"/><path d="M3 9 L6 15 L10 6" stroke="#222" stroke-width="1.8" fill="none"/><circle cx="13" cy="7" r="3.24" stroke="#222" stroke-width="1.8" fill="none" stroke-linecap="square"/></svg><div class="lbl" style="left:326px;top:999px">7</div><svg class="a" style="left:363px;top:974px" width="20" height="20"><rect width="20" height="20" fill="#bcd6bc"/><circle cx="9" cy="13" r="3.24" stroke="#222" stroke-width="1.8" fill="none" stroke-linecap="square"/><path d="M3 13 H17 M9 2 V8" stroke="#222" stroke-width="1.6"/><path d="M6 5 L9 2 L12 5" stroke="#222" fill="none" stroke-width="1.4"/><path d="M13 2 L17 6 M17 2 L13 6" stroke="#222" stroke-width="1"/></svg><div class="lbl" style="left:358px;top:999px">8</div><svg class="a" style="left:395px;top:974px" width="20" height="20"><rect width="20" height="20" fill="#a8c8ee"/><circle cx="9" cy="7" r="3.24" stroke="#222" stroke-width="1.8" fill="none" stroke-linecap="square"/><path d="M3 7 H17 M9 12 V18" stroke="#222" stroke-width="1.6"/><path d="M6 15 L9 18 L12 15" stroke="#222" fill="none" stroke-width="1.4"/><path d="M13 14 L17 18 M17 14 L13 18" stroke="#222" stroke-width="1"/></svg><div class="lbl" style="left:390px;top:999px">9</div><svg class="a" style="left:427px;top:974px" width="20" height="20"><rect width="20" height="20" fill="#f01010"/><circle cx="12" cy="6" r="3.24" stroke="#ffd0d0" stroke-width="1.8" fill="none" stroke-linecap="square"/><circle cx="8" cy="14" r="3.24" stroke="#ffd0d0" stroke-width="1.8" fill="none" stroke-linecap="square"/><path d="M3 10 H17" stroke="#ffd0d0" stroke-width="1"/></svg><div class="lbl" style="left:422px;top:999px">10</div><svg class="a" style="left:459px;top:974px" width="20" height="20"><rect width="20" height="20" fill="#f0f000"/><circle cx="10" cy="6" r="3.24" stroke="#222" stroke-width="1.8" fill="none" stroke-linecap="square"/><path d="M4 4 H16" stroke="#222" stroke-width="1"/><text x="10" y="18" font-family="Liberation Mono" font-size="6" font-weight="bold" text-anchor="middle" fill="#1a1a1a">F-2ND</text></svg><div class="lbl" style="left:454px;top:999px">11</div><svg class="a" style="left:491px;top:974px" width="20" height="20"><rect width="20" height="20" fill="#18e0e0"/><circle cx="10" cy="6" r="3.24" stroke="#222" stroke-width="1.8" fill="none" stroke-linecap="square"/><path d="M4 8 H16" stroke="#222" stroke-width="1"/><text x="10" y="18" font-family="Liberation Mono" font-size="6" font-weight="bold" text-anchor="middle" fill="#1a1a1a">B-2ND</text></svg><div class="lbl" style="left:486px;top:999px">12</div><svg class="a" style="left:523px;top:974px" width="20" height="20"><rect width="20" height="20" fill="#10e010"/><circle cx="7" cy="7" r="2.7" stroke="#222" stroke-width="1.8" fill="none" stroke-linecap="square"/><circle cx="13" cy="5" r="2.7" stroke="#222" stroke-width="1.8" fill="none" stroke-linecap="square"/><text x="10" y="18" font-family="Liberation Mono" font-size="6" font-weight="bold" text-anchor="middle" fill="#1a1a1a">FB2ND</text></svg><div class="lbl" style="left:518px;top:999px">13</div><svg class="a" style="left:555px;top:974px" width="20" height="20"><rect width="20" height="20" fill="#c8c810"/><path d="M2.5 11 L6 15 L11 5 L15 13.5 L17.5 11" stroke="#111" stroke-width="1.6" fill="none"/></svg><div class="lbl" style="left:550px;top:999px">14</div><svg class="a" style="left:587px;top:974px" width="20" height="20"><rect width="20" height="20" fill="#10b4b4"/><circle cx="10" cy="13" r="3.24" stroke="#111" stroke-width="1.8" fill="none" stroke-linecap="square"/><path d="M3 9 H17" stroke="#111" stroke-width="1.8"/></svg><div class="lbl" style="left:582px;top:999px">15</div><svg class="a" style="left:619px;top:974px" width="20" height="20"><rect width="20" height="20" fill="#0a0ae6"/><path d="M4 4 L16 16 M16 4 L4 16" stroke="#fff" stroke-width="2.2"/></svg><div class="lbl" style="left:614px;top:999px">16</div><svg class="a" style="left:651px;top:974px" width="20" height="20"><rect width="20" height="20" fill="#a8a828"/><circle cx="10" cy="7" r="3.24" stroke="#f0f0c0" stroke-width="1.8" fill="none" stroke-linecap="square"/><path d="M3 13 H17" stroke="#f0f0c0" stroke-width="1.8" fill="none" stroke-linecap="square"/></svg><div class="lbl" style="left:646px;top:999px">17</div><svg class="a" style="left:683px;top:974px" width="20" height="20"><rect width="20" height="20" fill="#10a0a0"/><path d="M10 3 V18 M7 6 L10 8 L13 6 M7 10 L10 12 L13 10 M7 14 L10 16 L13 14" stroke="#f0f0f0" stroke-width="1.2" fill="none"/><rect x="3" y="3" width="1" height="1" fill="#f0f0f0"/><rect x="3" y="8" width="1" height="1" fill="#f0f0f0"/><rect x="3" y="13" width="1" height="1" fill="#f0f0f0"/><rect x="3" y="17" width="1" height="1" fill="#f0f0f0"/><rect x="16" y="3" width="1" height="1" fill="#f0f0f0"/><rect x="16" y="8" width="1" height="1" fill="#f0f0f0"/><rect x="16" y="13" width="1" height="1" fill="#f0f0f0"/><rect x="16" y="17" width="1" height="1" fill="#f0f0f0"/></svg><div class="lbl" style="left:678px;top:999px">18</div><svg class="a" style="left:715px;top:974px" width="20" height="20"><rect width="20" height="20" fill="#a010a8"/><path d="M10 3 V18 M7 6 L10 8 L13 6 M7 10 L10 12 L13 10 M7 14 L10 16 L13 14" stroke="#f8e0f8" stroke-width="1.2" fill="none"/><rect x="3" y="3" width="1" height="1" fill="#f8e0f8"/><rect x="3" y="8" width="1" height="1" fill="#f8e0f8"/><rect x="3" y="13" width="1" height="1" fill="#f8e0f8"/><rect x="3" y="17" width="1" height="1" fill="#f8e0f8"/><rect x="16" y="3" width="1" height="1" fill="#f8e0f8"/><rect x="16" y="8" width="1" height="1" fill="#f8e0f8"/><rect x="16" y="13" width="1" height="1" fill="#f8e0f8"/><rect x="16" y="17" width="1" height="1" fill="#f8e0f8"/></svg><div class="lbl" style="left:710px;top:999px">19</div><svg class="a" style="left:747px;top:974px" width="20" height="20"><rect width="20" height="20" fill="#a00808"/><path d="M3 5 H9" stroke="#ffe0e0" stroke-width="1.8" fill="none" stroke-linecap="square"/><circle cx="6" cy="11" r="2.8080000000000003" stroke="#ffe0e0" stroke-width="1.8" fill="none" stroke-linecap="square"/><path d="M15 16 V5 M12.5 8 L15 5 L17.5 8" stroke="#ffe0e0" stroke-width="1.6" fill="none"/><rect x="10" y="10" width="1.5" height="1.5" fill="#ffe0e0"/></svg><div class="lbl" style="left:742px;top:999px">20</div><svg class="a" style="left:779px;top:974px" width="20" height="20"><rect width="20" height="20" fill="#e0a010"/><path d="M5 4 L12 11" stroke="#111" stroke-width="2"/><path d="M4 3 L9 3.5 L4 8.5Z" fill="#111"/><text x="10" y="19" font-family="Liberation Mono" font-size="7" font-weight="bold" text-anchor="middle" fill="#1a1a1a">1P</text></svg><div class="lbl" style="left:774px;top:999px">21</div><svg class="a" style="left:811px;top:974px" width="20" height="20"><rect width="20" height="20" fill="#18c8a0"/><path d="M5 4 L12 11" stroke="#111" stroke-width="2"/><path d="M4 3 L9 3.5 L4 8.5Z" fill="#111"/><text x="10" y="19" font-family="Liberation Mono" font-size="7" font-weight="bold" text-anchor="middle" fill="#1a1a1a">2P</text></svg><div class="lbl" style="left:806px;top:999px">22</div><svg class="a" style="left:843px;top:974px" width="20" height="20"><rect width="20" height="20" fill="#b418e8"/><path d="M5 4 L12 11" stroke="#fff" stroke-width="2"/><path d="M4 3 L9 3.5 L4 8.5Z" fill="#fff"/><text x="10" y="19" font-family="Liberation Mono" font-size="7" font-weight="bold" text-anchor="middle" fill="#eee">3P</text></svg><div class="lbl" style="left:838px;top:999px">23</div><svg class="a" style="left:875px;top:974px" width="20" height="20"><rect width="20" height="20" fill="#88c49c"/><path d="M5 4 L12 11" stroke="#111" stroke-width="2"/><path d="M4 3 L9 3.5 L4 8.5Z" fill="#111"/><text x="10" y="19" font-family="Liberation Mono" font-size="7" font-weight="bold" text-anchor="middle" fill="#1a1a1a">4P</text></svg><div class="lbl" style="left:870px;top:999px">24</div><svg class="a" style="left:907px;top:974px" width="20" height="20"><rect width="20" height="20" fill="#0a14d8"/><path d="M5 4 L12 11" stroke="#fff" stroke-width="2"/><path d="M4 3 L9 3.5 L4 8.5Z" fill="#fff"/><text x="10" y="19" font-family="Liberation Mono" font-size="7" font-weight="bold" text-anchor="middle" fill="#eee">5P</text></svg><div class="lbl" style="left:902px;top:999px">25</div>
</body></html>
